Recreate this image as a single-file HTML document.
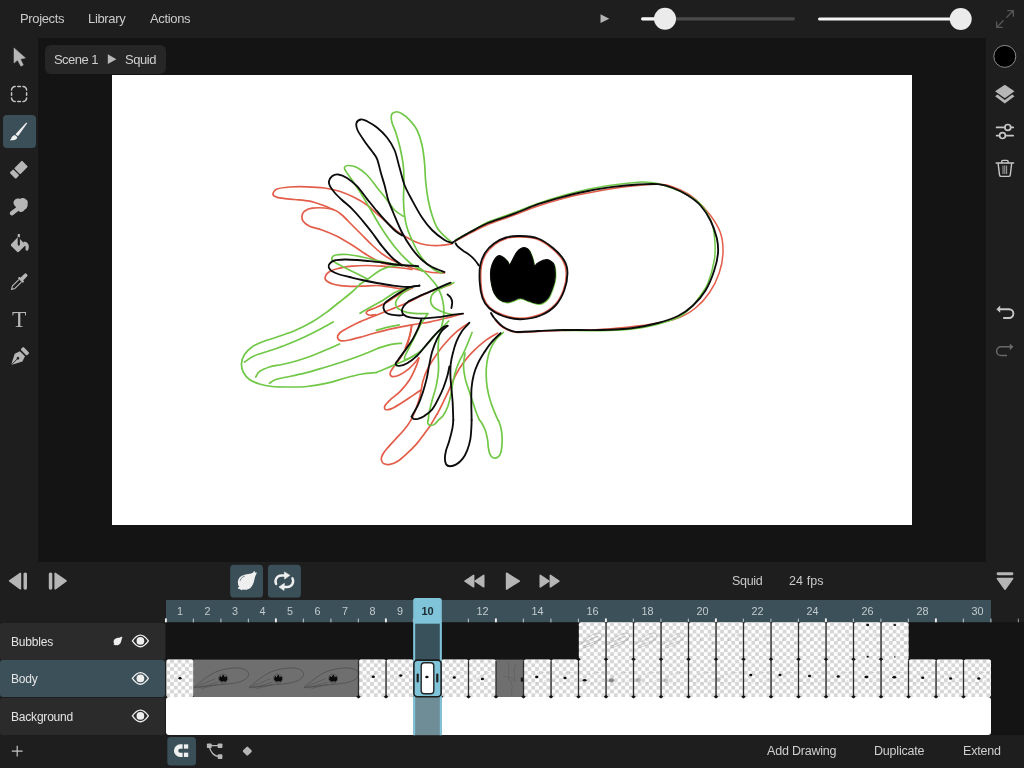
<!DOCTYPE html>
<html><head><meta charset="utf-8"><title>Animation</title>
<style>
*{margin:0;padding:0;box-sizing:border-box}
html,body{width:1024px;height:768px;overflow:hidden;background:#1e1e1e;font-family:"Liberation Sans",sans-serif;color:#d8d8d8}
.abs{position:absolute}
#app{position:relative;width:1024px;height:768px;background:#1e1e1e;overflow:hidden}
#stage{left:38px;top:38px;width:948px;height:524px;background:#141414}
#paper{left:112px;top:75px;width:800px;height:450px;background:#fff}
#crumb{left:45px;top:45px;width:121px;height:29px;border-radius:6px;background:#262626}
.menu{top:11px;font-size:13px;color:#cbcbcb;letter-spacing:-0.35px;white-space:nowrap}
.t{white-space:nowrap;position:absolute;will-change:transform}
.seltool{left:2.5px;top:115px;width:33px;height:33px;border-radius:4px;background:#3a4f58}
.row{left:0;width:165px;height:37px;border-radius:3px;background:#2b2b2b}
.row.sel{background:#3c5059}
.lbl{font-size:12px;color:#e4e4e4;left:11px;letter-spacing:-0.2px}
.btn{border-radius:4px;background:#3a4f58}
svg{position:absolute;overflow:visible}

</style></head>
<body>
<div id="app">
<!-- top bar -->
<div class="t menu" style="left:20px">Projects</div>
<div class="t menu" style="left:88px">Library</div>
<div class="t menu" style="left:150px">Actions</div>
<svg class="abs" style="left:0;top:0" width="1024" height="38">
  <path d="M600.5 14.3 L609.3 18.7 L600.5 23.1Z" fill="#b4b4b4"/>
  <rect x="641" y="17.2" width="154" height="3.2" rx="1.6" fill="#4a4a4a"/>
  <rect x="641" y="17.2" width="26" height="3.2" rx="1.6" fill="#f4f4f4"/>
  <circle cx="665" cy="18.8" r="11" fill="#ebebeb"/>
  <rect x="818" y="17.4" width="143" height="3.2" rx="1.6" fill="#f4f4f4"/>
  <circle cx="960.7" cy="19" r="11" fill="#ebebeb"/>
  <g stroke="#575757" stroke-width="1.3" fill="none" stroke-linecap="round" stroke-linejoin="round">
    <path d="M1006.8 17.2 L1013.2 10.8 M1007.8 10.6 H1013.4 V16.2"/>
    <path d="M1003.2 20.8 L996.8 27.2 M1002.2 27.4 H996.6 V21.8"/>
  </g>
</svg>
<!-- stage -->
<div id="stage" class="abs"></div>
<div id="paper" class="abs"></div>
<div id="crumb" class="abs"></div>
<div class="t" style="left:54px;top:52px;font-size:13px;color:#cfcfcf;letter-spacing:-0.55px">Scene 1</div>
<div class="t" style="left:124.5px;top:52px;font-size:13px;color:#cfcfcf;letter-spacing:-0.45px">Squid</div>
<svg class="abs" style="left:0;top:0" width="200" height="80"><path d="M107.8 54.3 L116.4 59.2 L107.8 64.1Z" fill="#b8b8b8"/></svg>
<svg class="abs" style="left:0;top:0" width="1024" height="768" viewBox="0 0 1024 768" fill="none" stroke-linecap="round" stroke-linejoin="round">
<path d="M455.5 241.0 C458.4 239.5 467.6 234.5 473.0 231.8 C478.4 229.0 481.3 227.2 488.0 224.5 C494.7 221.8 504.7 218.6 513.0 215.5 C521.3 212.4 529.7 208.8 538.0 206.0 C546.3 203.2 554.7 200.7 563.0 198.5 C571.3 196.3 579.7 194.7 588.0 193.0 C596.3 191.3 604.7 189.8 613.0 188.5 C621.3 187.2 629.7 186.2 638.0 185.5 C646.3 184.8 655.9 183.8 663.0 184.5 C670.1 185.2 675.1 187.5 680.5 190.0 C685.9 192.5 690.5 195.0 695.5 199.2 C700.5 203.5 706.3 209.9 710.5 215.5 C714.7 221.1 718.4 226.8 720.5 233.0 C722.6 239.2 723.2 246.3 723.0 253.0 C722.8 259.7 721.5 266.3 719.2 273.0 C717.0 279.7 713.2 287.2 709.2 293.0 C705.3 298.8 700.7 303.8 695.5 308.0 C690.3 312.2 685.5 315.3 678.0 318.0 C670.5 320.7 661.3 322.5 650.5 324.2 C639.7 326.0 623.4 327.5 613.0 328.5 C602.6 329.5 596.3 329.7 588.0 330.0 C579.7 330.3 571.3 330.2 563.0 330.5 C554.7 330.8 545.9 331.2 538.0 331.5 C530.1 331.8 521.3 332.9 515.5 332.2 C509.7 331.6 506.3 329.5 503.0 327.5 C499.7 325.5 496.8 321.7 495.5 320.5" stroke="#e35e4a" stroke-width="1.5" fill="none"/>
<path d="M520.5 237.0 C525.8 237.2 532.7 237.5 538.0 239.5 C543.3 241.5 548.3 245.4 552.5 249.0 C556.7 252.6 560.7 256.9 563.0 261.0 C565.3 265.1 566.2 268.6 566.2 273.5 C566.3 278.4 565.2 285.2 563.2 290.5 C561.3 295.8 558.4 301.0 554.5 305.0 C550.6 309.0 545.7 312.3 540.0 314.5 C534.3 316.7 526.6 318.2 520.5 318.2 C514.4 318.3 508.6 316.8 503.5 315.0 C498.4 313.2 493.3 310.4 490.0 307.5 C486.7 304.6 485.0 301.6 483.5 297.5 C482.0 293.4 481.3 288.2 481.0 283.0 C480.7 277.8 480.7 270.8 481.5 266.0 C482.3 261.2 483.8 257.6 486.0 254.0 C488.2 250.4 491.6 247.1 495.0 244.5 C498.4 241.9 502.2 239.8 506.5 238.5 C510.8 237.2 515.2 236.8 520.5 237.0Z" stroke="#e35e4a" stroke-width="1.4" fill="none"/>
<path d="M452.0 243.8 C449.9 244.0 443.7 245.3 439.5 245.5 C435.3 245.7 430.8 245.5 427.0 245.0 C423.2 244.5 420.3 243.8 417.0 242.5 C413.7 241.2 410.3 239.4 407.0 237.5 C403.7 235.6 400.3 233.8 397.0 231.2 C393.7 228.8 390.3 225.4 387.0 222.5 C383.7 219.6 380.3 216.7 377.0 213.8 C373.7 210.8 370.8 207.7 367.0 205.0 C363.2 202.3 359.1 199.8 354.5 197.5 C349.9 195.2 344.5 192.8 339.5 191.2 C334.5 189.7 329.9 188.8 324.5 188.0 C319.1 187.2 312.8 186.9 307.0 186.8 C301.2 186.6 294.5 186.6 289.5 187.0 C284.5 187.4 279.7 188.0 277.0 189.0 C274.3 190.0 273.7 191.8 273.2 193.0 C272.8 194.2 273.0 195.4 274.5 196.2 C276.0 197.1 278.7 197.7 282.0 198.2 C285.3 198.8 289.9 199.0 294.5 199.5 C299.1 200.0 304.9 200.3 309.5 201.2 C314.1 202.2 318.0 203.6 322.0 205.0 C326.0 206.4 331.4 208.8 333.2 209.5" stroke="#e35e4a" stroke-width="1.7" fill="none"/>
<path d="M444.5 273.0 C442.4 272.9 436.6 273.1 432.0 272.5 C427.4 271.9 421.6 270.7 417.0 269.5 C412.4 268.3 408.7 267.1 404.5 265.5 C400.3 263.9 395.8 262.0 392.0 260.0 C388.2 258.0 385.3 256.2 382.0 253.8 C378.7 251.2 375.3 248.1 372.0 245.0 C368.7 241.9 365.3 238.3 362.0 235.0 C358.7 231.7 355.3 228.3 352.0 225.0 C348.7 221.7 344.9 217.5 342.0 215.0 C339.1 212.5 337.4 211.2 334.5 210.0 C331.6 208.8 328.2 208.3 324.5 208.0 C320.8 207.7 315.3 207.7 312.0 208.2 C308.7 208.8 306.2 209.9 304.5 211.2 C302.8 212.6 302.2 214.6 302.0 216.2 C301.8 217.9 302.0 219.6 303.2 221.2 C304.5 222.9 306.4 224.8 309.5 226.2 C312.6 227.7 317.4 228.3 322.0 230.0 C326.6 231.7 332.0 233.8 337.0 236.2 C342.0 238.8 347.0 241.9 352.0 245.0 C357.0 248.1 362.4 252.2 367.0 255.0 C371.6 257.8 375.8 260.3 379.5 262.0 C383.2 263.7 387.8 264.5 389.5 265.0" stroke="#e35e4a" stroke-width="1.7" fill="none"/>
<path d="M412.0 269.5 C410.3 269.2 407.0 268.5 402.0 268.0 C397.0 267.5 387.8 266.7 382.0 266.2 C376.2 265.8 372.0 265.5 367.0 265.5 C362.0 265.5 357.0 265.7 352.0 266.2 C347.0 266.8 341.0 267.7 337.0 268.8 C333.0 269.8 330.2 271.0 328.2 272.5 C326.2 274.0 325.2 276.0 325.0 277.5 C324.8 279.0 325.4 280.1 327.0 281.2 C328.6 282.4 331.2 283.7 334.5 284.5 C337.8 285.3 342.4 286.0 347.0 286.2 C351.6 286.5 357.0 286.4 362.0 286.2 C367.0 286.1 372.4 285.4 377.0 285.5 C381.6 285.6 385.3 286.5 389.5 287.0 C393.7 287.5 398.2 288.6 402.0 288.8 C405.8 288.9 410.3 288.1 412.0 288.0" stroke="#e35e4a" stroke-width="1.7" fill="none"/>
<path d="M412.3 288.0 C410.4 288.9 404.7 291.4 400.6 293.6 C396.6 295.9 392.3 299.1 388.1 301.4 C384.0 303.8 379.0 306.1 375.6 307.7 C372.2 309.2 369.4 309.9 367.8 310.8 C366.2 311.7 366.0 312.4 366.2 313.2 C366.5 313.9 367.8 314.9 369.4 315.2 C370.9 315.4 374.6 314.8 375.6 314.7" stroke="#e35e4a" stroke-width="1.7" fill="none"/>
<path d="M451.4 284.2 C450.8 284.5 450.2 284.9 447.5 285.8 C444.8 286.7 439.2 288.2 435.0 289.7 C430.8 291.3 427.2 293.0 422.5 295.2 C417.8 297.4 412.1 300.7 406.9 303.0 C401.7 305.3 396.5 307.2 391.2 309.2 C386.0 311.3 380.8 313.4 375.6 315.5 C370.4 317.6 362.6 320.7 360.0 321.8" stroke="#e35e4a" stroke-width="1.7" fill="none"/>
<path d="M461.6 313.9 C459.2 314.6 452.7 316.5 447.5 317.8 C442.3 319.1 436.3 320.6 430.3 321.8 C424.3 322.9 418.1 323.7 411.6 324.9 C405.1 326.0 397.2 327.5 391.2 328.8 C385.3 330.1 380.8 331.3 375.6 332.7 C370.4 334.1 362.6 336.6 360.0 337.4" stroke="#e35e4a" stroke-width="1.7" fill="none"/>
<path d="M411.6 324.9 C411.4 326.4 411.4 330.4 410.3 334.2 C409.3 338.1 406.1 345.7 405.3 348.0" stroke="#e35e4a" stroke-width="1.7" fill="none"/>
<path d="M411.9 325.0 C411.5 326.8 410.5 332.3 409.6 335.9 C408.7 339.6 408.2 343.0 406.5 346.9 C404.8 350.8 401.8 355.7 399.4 359.4 C397.1 363.0 394.0 366.4 392.4 368.8 C390.8 371.1 390.1 372.1 390.1 373.4 C390.1 374.7 390.8 376.3 392.4 376.6 C394.0 376.8 396.7 376.3 399.4 375.0 C402.2 373.7 406.1 371.0 408.8 368.8 C411.5 366.5 414.2 363.5 415.8 361.7 C417.5 359.9 418.1 358.5 418.5 357.8" stroke="#e35e4a" stroke-width="1.7" fill="none"/>
<path d="M419.0 358.1 C418.4 359.6 417.4 363.6 415.8 367.2 C414.3 370.8 412.2 375.7 409.6 379.7 C407.0 383.7 403.3 388.2 400.2 391.4 C397.1 394.7 393.4 396.9 390.8 399.2 C388.3 401.6 386.0 403.8 385.1 405.5 C384.2 407.2 384.3 408.9 385.4 409.4 C386.5 409.9 388.8 409.8 391.6 408.6 C394.5 407.4 399.0 404.5 402.6 402.3 C406.1 400.2 409.7 397.6 412.7 395.6 C415.7 393.6 419.2 391.2 420.5 390.3" stroke="#e35e4a" stroke-width="1.7" fill="none"/>
<path d="M468.2 323.4 C466.4 324.7 461.2 327.9 457.2 331.2 C453.3 334.6 448.4 339.6 444.8 343.8 C441.1 347.9 438.2 352.1 435.4 356.2 C432.5 360.4 429.6 364.6 427.6 368.8 C425.5 372.9 424.0 377.3 422.9 381.2 C421.8 385.2 421.6 388.8 420.8 392.2 C420.1 395.6 419.5 398.4 418.5 401.6 C417.5 404.7 415.6 409.6 415.1 411.2" stroke="#e35e4a" stroke-width="1.7" fill="none"/>
<path d="M497.6 333.1 C495.5 334.4 489.5 337.6 485.4 340.6 C481.3 343.7 476.5 347.9 472.9 351.6 C469.2 355.2 466.4 358.6 463.5 362.5 C460.6 366.4 458.0 370.6 455.7 375.0 C453.3 379.4 451.5 384.6 449.4 389.1 C447.4 393.5 445.5 397.4 443.5 401.6 C441.5 405.7 438.3 412.0 437.2 414.1" stroke="#e35e4a" stroke-width="1.7" fill="none"/>
<path d="M415.0 411.2 C414.3 412.9 412.3 417.8 410.5 420.9 C408.7 424.1 406.6 426.8 403.9 430.0 C401.3 433.2 397.4 437.0 394.6 440.2 C391.7 443.3 388.8 446.3 386.8 448.8 C384.7 451.2 383.3 453.2 382.4 455.0 C381.5 456.8 381.1 458.3 381.3 459.7 C381.5 461.1 382.2 462.8 383.6 463.6 C385.1 464.4 387.5 464.8 389.9 464.4 C392.2 464.0 394.8 463.1 397.7 461.2 C400.6 459.4 403.9 456.3 407.1 453.4 C410.2 450.6 413.6 447.3 416.4 444.1 C419.3 440.8 421.9 437.0 424.2 433.9 C426.6 430.8 428.6 428.2 430.5 425.3 C432.4 422.4 434.4 418.6 435.5 416.7 C436.6 414.8 436.9 414.5 437.2 414.1" stroke="#e35e4a" stroke-width="1.7" fill="none"/>
<path d="M360.0 321.8 C358.2 322.6 352.7 325.3 349.5 327.0 C346.3 328.7 342.8 330.3 340.8 332.0 C338.8 333.7 337.5 335.5 337.5 337.0 C337.5 338.5 338.8 340.2 340.8 340.8 C342.8 341.2 346.3 340.6 349.5 340.0 C352.7 339.4 358.2 337.7 360.0 337.2" stroke="#e35e4a" stroke-width="1.7" fill="none"/>
<path d="M455.5 240.0 C458.4 238.4 467.6 233.5 473.0 230.5 C478.4 227.5 481.3 224.9 488.0 222.0 C494.7 219.1 504.7 216.1 513.0 213.0 C521.3 209.9 529.7 206.4 538.0 203.5 C546.3 200.6 554.7 197.9 563.0 195.5 C571.3 193.1 579.7 191.0 588.0 189.2 C596.3 187.5 604.7 186.2 613.0 185.0 C621.3 183.8 631.8 182.7 638.0 182.2 C644.2 181.8 646.3 182.0 650.5 182.5 C654.7 183.0 657.6 183.3 663.0 185.0 C668.4 186.7 676.8 189.3 683.0 192.5 C689.2 195.7 695.7 199.2 700.5 204.2 C705.3 209.3 709.3 216.5 711.8 223.0 C714.2 229.5 714.6 236.8 715.0 243.0 C715.4 249.2 715.4 253.8 714.2 260.5 C713.1 267.2 710.3 277.2 708.0 283.0 C705.7 288.8 703.4 291.3 700.5 295.5 C697.6 299.7 694.2 304.3 690.5 308.0 C686.8 311.7 684.7 314.5 678.0 317.5 C671.3 320.5 658.8 324.0 650.5 326.0 C642.2 328.0 636.3 328.7 628.0 329.5 C619.7 330.3 611.3 330.6 600.5 330.8 C589.7 330.9 569.2 330.5 563.0 330.5" stroke="#70c846" stroke-width="1.5" fill="none"/>
<path d="M492.2 266.2 C493.1 263.5 494.8 260.4 496.0 258.8 C497.2 257.1 498.4 256.3 499.8 256.2 C501.1 256.2 502.6 257.2 504.0 258.2 C505.4 259.2 507.0 261.0 508.0 262.2 C509.0 263.5 509.2 265.7 510.0 265.5 C510.8 265.3 511.5 263.4 512.8 261.2 C514.0 259.1 515.9 254.6 517.5 252.5 C519.1 250.4 520.8 249.4 522.2 248.8 C523.7 248.1 524.8 248.1 526.0 248.5 C527.2 248.9 528.6 249.5 529.8 251.2 C530.9 253.0 532.1 256.7 533.0 259.2 C533.9 261.8 534.2 266.0 535.0 266.8 C535.8 267.5 536.2 265.0 538.0 264.0 C539.8 263.0 543.3 260.9 545.5 260.5 C547.7 260.1 549.5 260.8 551.0 261.8 C552.5 262.7 554.0 263.4 554.8 266.2 C555.5 269.1 555.8 275.0 555.5 278.8 C555.2 282.5 554.2 285.4 553.0 288.8 C551.8 292.1 550.3 296.2 548.5 298.8 C546.7 301.2 544.3 302.9 542.2 303.8 C540.2 304.6 538.1 304.1 536.0 303.8 C533.9 303.4 532.2 302.6 529.8 301.8 C527.2 300.9 523.7 298.8 521.0 298.8 C518.3 298.7 515.8 300.6 513.5 301.2 C511.2 301.9 509.5 303.0 507.2 302.8 C505.0 302.5 501.8 301.5 499.8 300.0 C497.7 298.5 496.0 296.0 494.8 293.8 C493.5 291.5 492.9 289.4 492.2 286.2 C491.6 283.1 491.0 278.3 491.0 275.0 C491.0 271.7 491.4 269.0 492.2 266.2Z" stroke="#70c846" stroke-width="1.5" fill="none"/>
<path d="M452.0 242.5 C450.8 241.5 447.0 238.8 444.5 236.2 C442.0 233.8 439.1 231.0 437.0 227.5 C434.9 224.0 433.5 219.6 432.0 215.0 C430.5 210.4 429.3 205.4 428.2 200.0 C427.2 194.6 426.4 188.8 425.8 182.5 C425.1 176.2 425.1 168.8 424.5 162.5 C423.9 156.2 423.2 150.4 422.0 145.0 C420.8 139.6 419.1 134.2 417.0 130.0 C414.9 125.8 412.0 122.7 409.5 120.0 C407.0 117.3 404.3 115.1 402.0 113.8 C399.7 112.4 397.5 111.5 395.8 111.8 C394.0 112.0 392.1 113.2 391.5 115.0 C390.9 116.8 391.3 119.6 392.0 122.5 C392.7 125.4 394.4 128.3 395.8 132.5 C397.1 136.7 398.8 142.1 400.0 147.5 C401.2 152.9 402.6 159.2 403.2 165.0 C403.9 170.8 404.0 176.7 404.0 182.5 C404.0 188.3 403.4 194.6 403.5 200.0 C403.6 205.4 403.9 210.4 404.5 215.0 C405.1 219.6 405.8 223.3 407.0 227.5 C408.2 231.7 410.1 235.8 412.0 240.0 C413.9 244.2 416.0 248.8 418.2 252.5 C420.5 256.2 423.0 259.6 425.8 262.5 C428.5 265.4 431.8 268.2 434.5 270.0 C437.2 271.8 440.8 272.5 442.0 273.0" stroke="#70c846" stroke-width="1.7" fill="none"/>
<path d="M403.2 216.2 C401.8 215.2 397.2 212.7 394.5 210.0 C391.8 207.3 389.9 203.8 387.0 200.0 C384.1 196.2 380.3 191.7 377.0 187.5 C373.7 183.3 370.3 178.3 367.0 175.0 C363.7 171.7 360.1 169.1 357.0 167.5 C353.9 165.9 350.3 165.5 348.2 165.5 C346.2 165.5 344.9 166.5 344.5 167.5 C344.1 168.5 344.5 169.2 345.8 171.2 C347.0 173.3 349.3 176.0 352.0 180.0 C354.7 184.0 358.9 190.0 362.0 195.0 C365.1 200.0 367.8 205.0 370.8 210.0 C373.7 215.0 376.4 220.0 379.5 225.0 C382.6 230.0 386.2 235.4 389.5 240.0 C392.8 244.6 396.2 248.8 399.5 252.5 C402.8 256.2 406.6 259.9 409.5 262.5 C412.4 265.1 414.9 266.6 417.0 268.0 C419.1 269.4 421.2 270.5 422.0 271.0" stroke="#70c846" stroke-width="1.7" fill="none"/>
<path d="M407.0 265.5 C404.5 265.2 397.0 264.6 392.0 263.8 C387.0 262.9 382.0 261.6 377.0 260.5 C372.0 259.4 367.0 258.0 362.0 257.0 C357.0 256.0 351.4 254.8 347.0 254.5 C342.6 254.2 338.2 254.5 335.8 255.0 C333.2 255.5 332.4 256.5 332.0 257.5 C331.6 258.5 331.6 259.8 333.2 261.2 C334.9 262.7 338.5 264.4 342.0 266.2 C345.5 268.1 350.3 270.4 354.5 272.5 C358.7 274.6 364.9 277.7 367.0 278.8" stroke="#70c846" stroke-width="1.7" fill="none"/>
<path d="M415.5 265.5 C416.6 266.3 420.0 268.1 422.5 270.2 C425.0 272.3 428.0 275.4 430.3 278.0 C432.7 280.6 434.7 282.9 436.6 285.8 C438.4 288.7 440.1 291.8 441.2 295.2 C442.4 298.6 443.2 302.5 443.6 306.1 C444.0 309.8 444.0 313.4 443.6 317.1 C443.2 320.7 442.0 324.6 441.2 328.0 C440.5 331.4 439.4 334.0 438.9 337.4 C438.4 340.7 438.3 346.2 438.1 348.0" stroke="#70c846" stroke-width="1.7" fill="none"/>
<path d="M403.8 265.2 C401.7 265.4 395.2 265.4 391.2 266.3 C387.3 267.1 384.0 268.2 380.3 270.2 C376.7 272.1 372.8 275.7 369.4 278.0 C366.0 280.3 361.6 283.2 360.0 284.2" stroke="#70c846" stroke-width="1.7" fill="none"/>
<path d="M406.9 288.2 C405.1 288.8 399.8 290.1 395.9 292.1 C392.0 294.0 387.9 297.3 383.4 299.9 C379.0 302.5 373.3 305.5 369.4 307.7 C365.5 309.9 361.6 312.2 360.0 313.2" stroke="#70c846" stroke-width="1.7" fill="none"/>
<path d="M411.6 287.4 C410.0 288.4 404.7 291.5 402.2 293.6 C399.7 295.7 397.8 298.1 396.7 299.9 C395.6 301.7 395.2 303.0 395.6 304.6 C396.0 306.1 397.2 307.9 399.1 309.2 C400.9 310.6 403.8 311.6 406.9 312.4 C410.0 313.1 414.3 313.4 417.8 313.6 C421.3 313.8 426.3 313.6 428.0 313.6" stroke="#70c846" stroke-width="1.7" fill="none"/>
<path d="M453.8 282.7 C452.2 283.3 447.2 285.3 444.4 286.6 C441.5 287.9 438.6 289.1 436.6 290.5 C434.5 291.9 432.9 293.4 431.9 295.2 C430.9 297.0 430.4 299.5 430.6 301.4 C430.9 303.4 431.9 305.3 433.4 306.9 C434.9 308.5 437.3 309.7 439.7 310.8 C442.0 311.9 445.2 313.0 447.5 313.6 C449.8 314.3 452.7 314.5 453.8 314.7" stroke="#70c846" stroke-width="1.7" fill="none"/>
<path d="M376.4 330.3 C378.4 329.8 384.3 328.1 388.1 327.2 C391.9 326.3 397.2 325.3 399.1 324.9" stroke="#70c846" stroke-width="1.8" fill="none"/>
<path d="M378.8 348.0 C380.8 347.4 387.5 345.2 391.2 344.4 C395.0 343.6 399.7 343.5 401.4 343.3" stroke="#70c846" stroke-width="1.7" fill="none"/>
<path d="M438.2 348.0 C438.2 349.1 438.1 351.0 438.2 354.7 C438.2 358.4 438.8 365.1 438.5 370.3 C438.2 375.5 437.2 381.0 436.2 385.9 C435.1 390.9 433.4 395.6 432.2 400.0 C431.1 404.4 429.8 409.2 429.1 412.5 C428.5 415.8 428.5 418.8 428.3 420.0" stroke="#70c846" stroke-width="1.7" fill="none"/>
<path d="M427.6 314.1 C426.5 315.6 423.4 319.8 421.3 323.4 C419.2 327.1 417.1 331.8 415.1 335.9 C413.0 340.1 410.5 345.1 408.8 348.4 C407.1 351.8 405.6 354.4 404.9 356.2 C404.3 358.1 404.0 359.1 404.9 359.4 C405.8 359.6 407.9 359.1 410.4 357.8 C412.8 356.5 416.6 354.2 419.8 351.6 C422.9 349.0 426.0 345.6 429.1 342.2 C432.2 338.8 435.9 334.1 438.5 331.2 C441.1 328.4 443.1 326.7 444.8 325.0 C446.4 323.3 448.0 321.7 448.7 321.1" stroke="#70c846" stroke-width="1.7" fill="none"/>
<path d="M416.6 353.9 C415.1 354.8 410.6 357.7 407.2 359.4 C403.9 361.1 400.0 362.5 396.3 364.1 C392.7 365.6 388.8 367.3 385.4 368.8 C382.0 370.2 377.6 372.0 376.0 372.7" stroke="#70c846" stroke-width="1.7" fill="none"/>
<path d="M472.1 332.5 C471.4 334.1 469.6 338.8 468.2 342.2 C466.8 345.6 465.1 349.7 463.5 353.1 C461.9 356.5 460.2 359.1 458.8 362.5 C457.4 365.9 455.9 369.8 454.9 373.4 C453.9 377.1 453.3 380.7 452.6 384.4 C451.9 388.0 451.5 391.7 450.7 395.3 C449.9 399.0 449.1 402.9 447.9 406.2 C446.6 409.6 444.8 413.3 443.2 415.6 C441.6 417.9 439.3 419.3 438.5 420.0" stroke="#70c846" stroke-width="1.7" fill="none"/>
<path d="M465.1 353.1 C464.8 355.2 463.5 361.5 463.5 365.6 C463.5 369.8 464.2 374.0 465.1 378.1 C466.0 382.3 467.7 386.7 469.0 390.6 C470.2 394.5 471.3 397.9 472.6 401.6 C473.8 405.2 475.2 409.4 476.3 412.5 C477.5 415.6 478.9 418.8 479.4 420.0" stroke="#70c846" stroke-width="1.7" fill="none"/>
<path d="M503.3 332.5 C502.2 333.6 498.5 336.1 496.3 339.1 C494.1 342.0 491.6 346.1 490.1 350.0 C488.5 353.9 487.6 358.3 486.9 362.5 C486.3 366.7 486.1 370.8 486.2 375.0 C486.2 379.2 486.6 383.3 487.2 387.5 C487.9 391.7 488.9 396.1 490.1 400.0 C491.2 403.9 492.7 407.6 494.0 410.9 C495.3 414.3 497.2 418.5 497.9 420.0" stroke="#70c846" stroke-width="1.7" fill="none"/>
<path d="M428.3 420.0 C428.2 420.5 427.4 422.1 427.7 423.0 C428.0 423.9 429.1 425.1 430.2 425.3 C431.3 425.5 433.0 425.3 434.4 424.4 C435.8 423.5 437.8 420.7 438.5 420.0" stroke="#70c846" stroke-width="1.7" fill="none"/>
<path d="M479.4 420.0 C479.7 420.4 480.3 420.5 481.3 422.2 C482.2 423.9 484.1 427.1 485.2 430.0 C486.2 432.9 487.0 436.5 487.5 439.4 C488.1 442.2 487.9 444.7 488.3 447.2 C488.7 449.7 489.1 452.4 489.9 454.2 C490.7 456.0 491.7 457.3 493.0 457.8 C494.3 458.3 496.4 458.2 497.7 457.3 C499.0 456.5 500.1 455.1 500.8 452.7 C501.5 450.2 501.9 446.0 502.1 442.5 C502.2 439.0 502.1 434.9 501.6 431.6 C501.1 428.2 499.9 424.1 499.2 422.2 C498.6 420.3 498.1 420.4 497.8 420.0" stroke="#70c846" stroke-width="1.7" fill="none"/>
<path d="M360.0 284.2 C358.7 285.5 355.4 289.0 352.0 292.0 C348.6 295.0 343.7 298.7 339.5 302.0 C335.3 305.3 331.6 308.7 327.0 312.0 C322.4 315.3 317.4 318.9 312.0 322.0 C306.6 325.1 300.3 328.2 294.5 330.8 C288.7 333.2 282.4 335.1 277.0 337.0 C271.6 338.9 266.2 340.3 262.0 342.0 C257.8 343.7 254.9 344.9 252.0 347.0 C249.1 349.1 246.2 351.8 244.5 354.5 C242.8 357.2 241.7 360.3 241.5 363.2 C241.3 366.2 241.9 369.3 243.2 372.0 C244.6 374.7 246.8 377.5 249.5 379.5 C252.2 381.5 255.8 382.8 259.5 384.0 C263.2 385.2 267.0 386.0 272.0 386.5 C277.0 387.0 283.7 387.0 289.5 387.0 C295.3 387.0 300.8 387.1 307.0 386.5 C313.2 385.9 320.8 384.6 327.0 383.2 C333.2 381.9 338.7 379.8 344.5 378.2 C350.3 376.7 356.8 375.0 362.0 374.0 C367.2 373.0 373.7 372.8 376.0 372.5" stroke="#70c846" stroke-width="1.7" fill="none"/>
<path d="M333.2 322.0 C331.0 323.2 324.3 327.0 319.5 329.5 C314.7 332.0 309.9 334.5 304.5 337.0 C299.1 339.5 292.8 342.2 287.0 344.5 C281.2 346.8 274.9 348.9 269.5 350.8 C264.1 352.6 258.7 353.9 254.5 355.8 C250.3 357.6 246.2 361.0 244.5 362.0" stroke="#70c846" stroke-width="1.7" fill="none"/>
<path d="M339.5 344.0 C337.4 344.9 331.6 347.5 327.0 349.5 C322.4 351.5 317.0 353.9 312.0 355.8 C307.0 357.6 302.0 359.3 297.0 360.8 C292.0 362.2 286.6 363.5 282.0 364.5 C277.4 365.5 273.2 365.8 269.5 367.0 C265.8 368.2 261.8 369.8 259.5 371.5 C257.2 373.2 256.4 376.1 255.8 377.0" stroke="#70c846" stroke-width="1.7" fill="none"/>
<path d="M378.8 348.0 C376.0 349.2 368.1 352.7 362.0 355.0 C355.9 357.3 348.7 359.8 342.0 362.0 C335.3 364.2 328.2 366.4 322.0 368.2 C315.8 370.1 310.3 371.8 304.5 373.2 C298.7 374.7 291.8 376.0 287.0 377.0 C282.2 378.0 278.7 378.5 275.8 379.5 C272.8 380.5 270.5 382.6 269.5 383.2" stroke="#70c846" stroke-width="1.7" fill="none"/>
<path d="M452.0 243.0 C453.8 241.8 459.1 238.3 463.0 236.0 C466.9 233.7 471.3 231.4 475.5 229.2 C479.7 227.1 481.8 225.5 488.0 223.0 C494.2 220.5 504.7 217.4 513.0 214.2 C521.3 211.1 529.7 207.2 538.0 204.2 C546.3 201.3 554.7 199.0 563.0 196.8 C571.3 194.5 579.7 192.7 588.0 191.0 C596.3 189.3 604.7 187.8 613.0 186.8 C621.3 185.7 630.5 184.9 638.0 184.5 C645.5 184.1 652.2 183.7 658.0 184.2 C663.8 184.8 668.0 186.1 673.0 188.0 C678.0 189.9 683.4 192.6 688.0 195.5 C692.6 198.4 696.8 201.3 700.5 205.5 C704.2 209.7 707.8 215.1 710.5 220.5 C713.2 225.9 715.5 232.6 716.8 238.0 C718.0 243.4 718.4 247.6 718.0 253.0 C717.6 258.4 716.3 264.2 714.2 270.5 C712.2 276.8 709.0 284.7 705.5 290.5 C702.0 296.3 697.6 301.2 693.0 305.5 C688.4 309.8 683.8 313.1 678.0 316.0 C672.2 318.9 665.5 321.0 658.0 323.0 C650.5 325.0 642.6 326.8 633.0 328.0 C623.4 329.2 612.2 329.7 600.5 330.0 C588.8 330.3 573.4 329.8 563.0 330.0 C552.6 330.2 545.9 330.7 538.0 331.0 C530.1 331.3 521.3 332.5 515.5 331.8 C509.7 331.0 506.5 329.0 503.0 326.8 C499.5 324.5 496.2 320.3 494.2 318.0 C492.2 315.7 491.5 313.8 491.0 313.0" stroke="#0c0c0c" stroke-width="1.85" fill="none"/>
<path d="M520.5 236.0 C525.8 236.2 532.6 236.5 538.0 238.5 C543.4 240.5 548.6 244.3 553.0 248.0 C557.4 251.7 561.8 256.3 564.2 260.5 C566.7 264.7 567.5 268.0 567.5 273.0 C567.5 278.0 566.2 285.1 564.2 290.5 C562.2 295.9 559.5 301.3 555.5 305.5 C551.5 309.7 546.3 313.2 540.5 315.5 C534.7 317.8 526.8 319.2 520.5 319.2 C514.2 319.3 508.2 317.9 503.0 316.0 C497.8 314.1 492.4 311.0 489.0 308.0 C485.6 305.0 484.0 302.2 482.5 298.0 C481.0 293.8 480.1 288.4 479.8 283.0 C479.4 277.6 479.4 270.5 480.2 265.5 C481.1 260.5 482.7 256.7 485.0 253.0 C487.3 249.3 490.5 246.1 494.0 243.5 C497.5 240.9 501.6 238.8 506.0 237.5 C510.4 236.2 515.2 235.8 520.5 236.0Z" stroke="#0c0c0c" stroke-width="1.85" fill="none"/>
<path d="M491.8 265.5 C492.6 262.8 494.2 259.7 495.5 258.0 C496.8 256.3 497.9 255.6 499.2 255.5 C500.6 255.4 502.1 256.5 503.5 257.5 C504.9 258.5 506.5 260.3 507.5 261.5 C508.5 262.7 508.7 264.9 509.5 264.8 C510.3 264.6 511.0 262.7 512.2 260.5 C513.5 258.3 515.4 253.8 517.0 251.8 C518.6 249.7 520.3 248.7 521.8 248.0 C523.2 247.3 524.2 247.3 525.5 247.8 C526.8 248.2 528.1 248.7 529.2 250.5 C530.4 252.3 531.6 255.9 532.5 258.5 C533.4 261.1 533.7 265.2 534.5 266.0 C535.3 266.8 535.8 264.3 537.5 263.2 C539.2 262.2 542.8 260.1 545.0 259.8 C547.2 259.4 549.0 260.0 550.5 261.0 C552.0 262.0 553.5 262.7 554.2 265.5 C555.0 268.3 555.3 274.2 555.0 278.0 C554.7 281.8 553.7 284.7 552.5 288.0 C551.3 291.3 549.8 295.5 548.0 298.0 C546.2 300.5 543.8 302.2 541.8 303.0 C539.7 303.8 537.6 303.3 535.5 303.0 C533.4 302.7 531.8 301.8 529.2 301.0 C526.8 300.2 523.2 298.1 520.5 298.0 C517.8 297.9 515.3 299.8 513.0 300.5 C510.7 301.2 509.0 302.2 506.8 302.0 C504.5 301.8 501.3 300.8 499.2 299.2 C497.2 297.8 495.5 295.3 494.2 293.0 C493.0 290.7 492.4 288.6 491.8 285.5 C491.1 282.4 490.5 277.6 490.5 274.2 C490.5 270.9 490.9 268.2 491.8 265.5Z" stroke="#0c0c0c" stroke-width="1.2" fill="#000"/>
<path d="M452.5 243.0 C451.2 242.5 447.9 242.2 444.5 240.0 C441.1 237.8 435.8 233.8 432.0 230.0 C428.2 226.2 425.3 222.5 422.0 217.5 C418.7 212.5 414.9 205.4 412.0 200.0 C409.1 194.6 406.6 190.4 404.5 185.0 C402.4 179.6 401.2 173.3 399.5 167.5 C397.8 161.7 396.6 155.0 394.5 150.0 C392.4 145.0 389.9 141.2 387.0 137.5 C384.1 133.8 380.3 130.2 377.0 127.5 C373.7 124.8 369.7 122.6 367.0 121.2 C364.3 119.9 362.5 119.2 360.8 119.5 C359.0 119.8 357.0 121.2 356.5 123.0 C356.0 124.8 356.2 127.0 357.5 130.0 C358.8 133.0 362.1 137.7 364.5 141.2 C366.9 144.8 369.9 148.3 372.0 151.2 C374.1 154.2 375.5 155.2 377.0 158.8 C378.5 162.3 379.5 168.1 380.8 172.5 C382.0 176.9 383.2 180.4 384.5 185.0 C385.8 189.6 386.8 195.4 388.2 200.0 C389.7 204.6 391.0 207.1 393.2 212.5 C395.5 217.9 398.9 226.5 402.0 232.5 C405.1 238.5 408.7 244.2 412.0 248.8 C415.3 253.3 418.7 257.0 422.0 260.0 C425.3 263.0 428.2 265.0 432.0 267.0 C435.8 269.0 442.4 271.2 444.5 272.0" stroke="#0c0c0c" stroke-width="1.85" fill="none"/>
<path d="M402.5 235.5 C401.4 234.8 398.3 233.4 395.8 231.2 C393.2 229.1 390.1 225.8 387.0 222.5 C383.9 219.2 380.3 215.2 377.0 211.2 C373.7 207.3 370.3 202.9 367.0 198.8 C363.7 194.6 360.3 189.7 357.0 186.2 C353.7 182.8 350.1 180.0 347.0 178.0 C343.9 176.0 340.8 174.8 338.2 174.5 C335.8 174.2 333.5 175.1 332.0 176.2 C330.5 177.4 329.3 179.6 329.0 181.2 C328.7 182.9 329.1 184.4 330.0 186.2 C330.9 188.1 332.5 190.2 334.5 192.5 C336.5 194.8 339.1 197.3 342.0 200.0 C344.9 202.7 348.7 205.4 352.0 208.8 C355.3 212.1 358.7 216.0 362.0 220.0 C365.3 224.0 368.7 228.1 372.0 232.5 C375.3 236.9 378.7 242.1 382.0 246.2 C385.3 250.4 388.7 254.3 392.0 257.5 C395.3 260.7 400.3 264.2 402.0 265.5" stroke="#0c0c0c" stroke-width="1.85" fill="none"/>
<path d="M418.2 266.2 C416.4 266.1 411.0 265.8 407.0 265.5 C403.0 265.2 398.7 265.0 394.5 264.5 C390.3 264.0 386.2 263.0 382.0 262.5 C377.8 262.0 373.7 261.7 369.5 261.2 C365.3 260.8 361.2 260.3 357.0 260.0 C352.8 259.7 348.2 259.4 344.5 259.5 C340.8 259.6 337.0 259.8 334.5 260.5 C332.0 261.2 330.5 262.6 329.5 263.8 C328.5 264.9 328.3 266.2 328.8 267.5 C329.2 268.8 330.2 270.1 332.0 271.2 C333.8 272.4 336.6 273.5 339.5 274.5 C342.4 275.5 345.8 276.1 349.5 277.0 C353.2 277.9 357.4 279.0 362.0 280.0 C366.6 281.0 372.0 282.1 377.0 283.0 C382.0 283.9 387.0 284.8 392.0 285.5 C397.0 286.2 402.4 287.0 407.0 287.0 C411.6 287.0 417.4 285.8 419.5 285.5" stroke="#0c0c0c" stroke-width="1.85" fill="none"/>
<path d="M455.6 243.3 C456.0 243.8 456.4 245.2 457.7 246.4 C458.9 247.7 461.2 249.2 463.1 250.7 C465.1 252.1 467.4 253.3 469.4 254.9 C471.3 256.4 473.3 258.3 474.8 260.0 C476.4 261.8 478.1 264.6 478.8 265.5" stroke="#0c0c0c" stroke-width="1.85" fill="none"/>
<path d="M419.4 285.8 C417.8 286.0 413.1 286.0 410.0 287.1 C406.9 288.1 403.8 290.2 400.6 292.1 C397.5 293.9 393.9 296.5 391.2 298.3 C388.6 300.1 386.3 301.4 385.0 303.0 C383.7 304.6 383.3 306.1 383.4 307.7 C383.6 309.2 384.5 311.2 385.8 312.4 C387.1 313.5 389.0 314.2 391.2 314.7 C393.5 315.2 397.0 315.5 399.1 315.5 C401.1 315.5 402.7 315.0 403.4 314.9" stroke="#0c0c0c" stroke-width="1.85" fill="none"/>
<path d="M450.6 282.7 C449.1 283.3 444.9 285.0 441.2 286.6 C437.6 288.2 432.7 290.4 428.8 292.1 C424.8 293.8 421.2 295.2 417.8 296.8 C414.4 298.3 410.8 299.9 408.4 301.4 C406.1 303.0 404.8 304.6 403.8 306.1 C402.7 307.7 401.9 309.4 401.9 310.8 C401.9 312.2 402.4 313.6 403.8 314.7 C405.1 315.8 407.4 316.8 410.0 317.4 C412.6 318.0 416.0 318.2 419.4 318.3 C422.8 318.4 426.7 318.1 430.3 317.8 C434.0 317.6 437.3 317.3 441.2 316.8 C445.2 316.2 450.1 315.2 453.8 314.7 C457.4 314.2 461.6 313.8 463.1 313.6" stroke="#0c0c0c" stroke-width="1.85" fill="none"/>
<path d="M447.5 294.4 C448.0 294.9 449.8 296.2 450.6 297.5 C451.4 298.8 452.1 300.5 452.2 302.2 C452.3 304.0 451.5 307.0 451.4 308.0" stroke="#0c0c0c" stroke-width="1.85" fill="none"/>
<path d="M421.3 319.5 C420.8 321.0 419.8 324.6 418.2 328.1 C416.6 331.6 414.3 336.7 411.9 340.6 C409.6 344.5 406.5 348.3 404.1 351.6 C401.8 354.8 399.3 358.1 397.9 360.2 C396.4 362.2 395.3 363.1 395.5 364.1 C395.8 365.0 397.5 366.1 399.4 365.9 C401.4 365.8 404.4 364.9 407.2 363.3 C410.1 361.7 413.5 359.2 416.6 356.2 C419.8 353.3 422.9 349.0 426.0 345.3 C429.1 341.7 432.5 337.4 435.4 334.4 C438.2 331.4 441.2 328.8 443.2 327.3 C445.2 325.9 446.8 326.0 447.6 325.8" stroke="#0c0c0c" stroke-width="1.85" fill="none"/>
<path d="M447.6 325.8 C446.6 326.7 443.4 329.0 441.6 331.2 C439.9 333.5 438.5 335.7 436.9 339.1 C435.4 342.4 433.6 347.1 432.2 351.6 C430.9 356.0 430.0 361.2 429.1 365.6 C428.2 370.1 427.8 373.7 426.8 378.1 C425.7 382.6 424.3 387.8 422.9 392.2 C421.4 396.6 419.8 401.1 418.2 404.7 C416.6 408.3 414.3 411.7 413.2 413.8 C412.1 415.8 411.9 416.2 411.6 416.7" stroke="#0c0c0c" stroke-width="1.85" fill="none"/>
<path d="M469.4 322.7 C468.2 324.1 464.1 328.1 461.9 331.2 C459.8 334.4 458.0 337.8 456.5 341.4 C455.0 345.1 453.8 349.3 452.9 353.1 C451.9 356.9 451.1 360.4 450.7 364.1 C450.3 367.7 450.3 371.1 450.4 375.0 C450.5 378.9 450.9 383.1 451.3 387.5 C451.7 391.9 452.2 396.1 452.6 401.6 C452.9 407.0 453.2 416.9 453.3 420.0" stroke="#0c0c0c" stroke-width="1.85" fill="none"/>
<path d="M449.4 366.4 C449.1 367.8 448.6 371.5 447.6 375.0 C446.6 378.5 445.0 383.6 443.5 387.5 C442.0 391.4 440.4 394.8 438.5 398.4 C436.6 402.1 434.6 406.5 432.2 409.4 C429.9 412.3 426.8 414.4 424.4 415.9 C422.0 417.5 419.7 418.3 417.9 418.8 C416.1 419.2 414.5 419.1 413.5 418.8 C412.5 418.4 411.9 417.1 411.6 416.7" stroke="#0c0c0c" stroke-width="1.85" fill="none"/>
<path d="M500.7 333.1 C499.2 334.6 494.4 338.9 491.6 342.2 C488.8 345.5 486.2 349.5 483.8 353.1 C481.5 356.8 479.3 360.4 477.6 364.1 C475.9 367.7 474.6 371.1 473.7 375.0 C472.7 378.9 472.0 383.1 471.6 387.5 C471.2 391.9 471.3 396.1 471.3 401.6 C471.3 407.0 471.6 416.9 471.6 420.0" stroke="#0c0c0c" stroke-width="1.85" fill="none"/>
<path d="M453.3 420.0 C453.2 421.4 453.1 424.9 452.4 428.4 C451.7 431.9 450.3 437.3 449.2 440.9 C448.2 444.6 446.9 447.4 446.1 450.3 C445.4 453.2 444.9 455.8 444.9 458.1 C444.9 460.5 445.3 463.0 446.1 464.4 C447.0 465.7 448.3 466.2 450.0 466.2 C451.7 466.2 454.2 465.6 456.3 464.4 C458.4 463.2 460.7 461.2 462.5 458.9 C464.4 456.6 465.9 453.6 467.2 450.3 C468.5 447.1 469.6 443.3 470.3 439.4 C471.0 435.5 471.2 430.1 471.4 426.9 C471.6 423.6 471.6 421.1 471.6 420.0" stroke="#0c0c0c" stroke-width="1.85" fill="none"/>
</svg>
<!-- left toolbar -->
<div class="abs seltool"></div>
<svg class="abs" style="left:0;top:0" width="1024" height="768" viewBox="0 0 1024 768"><path d="M14 47.9 L14 63.1 L17.5 60.1 L20.9 66.2 L23.3 64.9 L20.4 59.1 L25.4 57.9 Z" fill="#b6b6b6" stroke="#b6b6b6" stroke-width="0.5" stroke-linejoin="round"/>
<path d="M11.55 90.05 A3.6 3.6 0 0 1 15.15 86.45 M23.00 86.45 A3.6 3.6 0 0 1 26.60 90.05 M26.60 97.90 A3.6 3.6 0 0 1 23.00 101.50 M15.15 101.50 A3.6 3.6 0 0 1 11.55 97.90 M17.73 86.45 H20.43 M17.73 101.50 H20.43 M11.55 92.63 V95.33 M26.60 92.63 V95.33" fill="none" stroke="#c4c4c4" stroke-width="1.5" stroke-linecap="round"/>
<path d="M26.3 122.5 L27.2 123.2 L18.0 136.3 L15.5 134.2 Z" fill="#efefef"/>
<path d="M14.8 135.0 L17.2 137.0 C17.2 139.6 14.4 140.4 9.8 140.4 C11.6 139.2 11.2 136.0 14.8 135.0 Z" fill="#efefef"/>
<g transform="translate(18.8,169.7) rotate(-45)" fill="#b6b6b6"><rect x="-8.7" y="-4.3" width="5.1" height="8.6" rx="1"/><rect x="-2.4" y="-4.3" width="11.1" height="8.6" rx="1"/></g>
<path d="M14.2 200.6 C15.6 198.6 18.4 198.2 20 198.9 C21.8 197.7 24.4 197.9 25.6 199.3 C27.4 200 28.2 202 27.6 204 C28 206.4 26.8 208.6 24.8 209.6 C23.6 211.8 21 212.6 19.2 211.4 L17.4 209 L14.6 205.4 C13.2 204.2 13.2 202 14.2 200.6 Z" fill="#b6b6b6"/>
<path d="M19.6 207.4 L11.9 213.3" stroke="#b6b6b6" stroke-width="4.3" stroke-linecap="round"/>
<g transform="translate(18.0,244.9) rotate(45)"><rect x="-5.5" y="-5.5" width="11" height="11" rx="1.4" fill="#b6b6b6"/></g>
<path d="M23.4 241.8 C26.8 241.6 29 243.6 28.8 247 C28.7 249.4 28.1 250.8 26.9 250.8 C25.5 250.8 25.4 249.3 25.6 247.7 C25.8 246.3 25.2 245.3 24.2 245 Z" fill="#b6b6b6"/>
<path d="M18.8 234 V238.2" stroke="#b6b6b6" stroke-width="2.2"/>
<path d="M18.8 238 V244.6" stroke="#1e1e1e" stroke-width="2.2" stroke-linecap="round"/>
<g transform="translate(19,281.9) rotate(45)"><path d="M-1.8 -1.5 V7.5 L0 10.6 L1.8 7.5 V-1.5" fill="none" stroke="#b6b6b6" stroke-width="1.1" stroke-linejoin="round"/><rect x="-3.4" y="-4" width="6.8" height="2.2" rx="0.6" fill="#b6b6b6"/><rect x="-1.9" y="-11" width="3.8" height="8" rx="1.6" fill="#b6b6b6"/></g>
<text x="19.3" y="327.4" font-family="Liberation Serif, serif" font-size="23.6" fill="#b6b6b6" text-anchor="middle">T</text>
<g transform="translate(19.6,356.6) rotate(45)"><path d="M0 12 L-5.4 1.5 L-3.6 -4 L3.6 -4 L5.4 1.5 Z" fill="#b6b6b6"/><path d="M0 12 V3" stroke="#1e1e1e" stroke-width="0.9"/><circle cx="0" cy="2.3" r="1.3" fill="#1e1e1e"/><rect x="-4.4" y="-9.6" width="8.8" height="4" rx="1.1" fill="#b6b6b6"/></g></svg>
<!-- right toolbar -->
<svg class="abs" style="left:0;top:0" width="1024" height="768" viewBox="0 0 1024 768"><circle cx="1004.8" cy="56.4" r="11" fill="#000" stroke="#8c8c8c" stroke-width="1"/>
<path d="M1004.8 84.8 L1014.5 91.3 L1004.8 98.2 L995.1 91.3 Z" fill="#b6b6b6"/>
<path d="M995.1 96.3 L997.5 94.6 L1004.8 99.9 L1012.1 94.6 L1014.5 96.3 L1004.8 103.5 Z" fill="#b6b6b6"/>
<g stroke="#c6c6c6" stroke-width="1.7" fill="none" stroke-linecap="round"><path d="M996.6 127.4 H1004.6 M1011 127.4 H1013.2"/><circle cx="1007.8" cy="127.4" r="2.9"/><path d="M996.6 135.6 H998.9 M1005.6 135.6 H1013.2"/><circle cx="1002.5" cy="135.6" r="2.9"/></g>
<g stroke="#c6c6c6" stroke-width="1.4" fill="none" stroke-linecap="round" stroke-linejoin="round"><path d="M996.2 163 H1013.6"/><path d="M1001.7 162.8 V161.6 Q1001.7 160.4 1002.9 160.4 H1006.9 Q1008.1 160.4 1008.1 161.6 V162.8"/><path d="M998.2 163.8 L999.5 174.8 Q999.7 176.4 1001.3 176.4 H1008.5 Q1010.1 176.4 1010.3 174.8 L1011.6 163.8"/></g>
<g stroke="#9a9a9a" stroke-width="1.1"><path d="M1003 165.6 V174 M1004.8 165.6 V174 M1006.6 165.6 V174"/></g>
<path d="M999.6 309.2 H1009 A4.4 4.4 0 0 1 1009 318 H1003.2" fill="none" stroke="#c6c6c6" stroke-width="1.9"/>
<path d="M996.4 309.2 L1000.2 305.6 V312.8 Z" fill="#c6c6c6"/>
<path d="M1010.4 346.8 H1001 A4.35 4.35 0 0 0 1001 355.5 H1007" fill="none" stroke="#6a6a6a" stroke-width="1.5"/>
<path d="M1013.4 346.8 L1009.8 343.4 V350.2 Z" fill="#6a6a6a"/></svg>
<!-- bottom -->
<svg class="abs" style="left:0;top:0" width="1024" height="768" viewBox="0 0 1024 768"><path d="M9.60 580.90 L20.40 573.40 L20.40 588.80 Z" fill="#b6b6b6" stroke="#b6b6b6" stroke-width="1.6" stroke-linejoin="round"/>
<rect x="23.5" y="572.5" width="3.5" height="17.2" rx="1.6" fill="#b6b6b6"/>
<rect x="48.8" y="572.5" width="3.5" height="17.2" rx="1.6" fill="#b6b6b6"/>
<path d="M66.10 580.90 L55.20 573.40 L55.20 588.80 Z" fill="#b6b6b6" stroke="#b6b6b6" stroke-width="1.6" stroke-linejoin="round"/>
<rect x="230.2" y="564.7" width="32.8" height="32.8" rx="3.6" fill="#3a4f58"/>
<rect x="267.9" y="564.7" width="33" height="32.8" rx="3.6" fill="#3a4f58"/>
<path d="M254.5 571.1 C254.2 571.3 253.6 572.1 253.1 572.4 C252.5 572.8 251.9 573.2 251.1 573.4 C250.4 573.7 249.4 573.8 248.4 574.0 C247.4 574.2 246.3 574.2 245.3 574.4 C244.3 574.6 243.5 574.9 242.5 575.4 C241.6 575.9 240.5 576.5 239.8 577.3 C239.1 578.1 238.6 579.2 238.2 580.1 C237.9 581.0 237.8 581.9 237.9 582.8 C237.9 583.7 238.2 584.8 238.4 585.5 C238.7 586.2 239.3 586.8 239.4 587.1 L237.86 587.48 L238.05 588.66 L239.42 589.05 L240.40 589.44 L241.77 590.22 L242.74 589.44 L242.7 589.4 C243.2 589.5 244.4 589.9 245.3 589.8 C246.2 589.8 247.2 589.6 248.0 589.2 C248.9 588.9 249.6 588.5 250.4 587.9 C251.1 587.3 251.8 586.4 252.3 585.5 C252.9 584.6 253.3 583.4 253.7 582.4 C254.0 581.4 254.2 580.3 254.5 579.3 C254.7 578.3 254.9 577.4 255.2 576.5 C255.5 575.7 255.9 574.9 256.2 574.2 C256.5 573.5 256.9 572.7 257.0 572.4 L255.44 572.72 Z" fill="#efefef"/>
<path d="M240.2 580.5 C240.8 578.4 242.4 576.9 244.5 576.2" fill="none" stroke="#3a4f58" stroke-width="0.65" stroke-linecap="round"/>
<g fill="none" stroke="#efefef" stroke-width="2.4" stroke-linecap="round"><path d="M276.1 584 A5.9 5.9 0 0 1 281.2 575.5 H284.6"/><path d="M292.4 578.3 A5.9 5.9 0 0 1 287.4 587 H284"/></g>
<path d="M284.3 571.9 L289.9 575.3 L284.7 579.1 Z" fill="#efefef" stroke="#efefef" stroke-width="0.6" stroke-linejoin="round"/>
<path d="M284.4 583.3 L278.9 587 L284 590.4 Z" fill="#efefef" stroke="#efefef" stroke-width="0.6" stroke-linejoin="round"/>
<path d="M465.00 581.10 L473.60 575.40 L473.60 586.80 Z" fill="#b6b6b6" stroke="#b6b6b6" stroke-width="1.6" stroke-linejoin="round"/>
<path d="M475.20 581.10 L483.70 575.40 L483.70 586.80 Z" fill="#b6b6b6" stroke="#b6b6b6" stroke-width="1.6" stroke-linejoin="round"/>
<path d="M506.60 573.20 L519.30 581.10 L506.60 589.00 Z" fill="#b6b6b6" stroke="#b6b6b6" stroke-width="1.6" stroke-linejoin="round"/>
<path d="M540.30 575.40 L548.90 581.10 L540.30 586.80 Z" fill="#b6b6b6" stroke="#b6b6b6" stroke-width="1.6" stroke-linejoin="round"/>
<path d="M550.40 575.40 L558.90 581.10 L550.40 586.80 Z" fill="#b6b6b6" stroke="#b6b6b6" stroke-width="1.6" stroke-linejoin="round"/>
<rect x="996.6" y="572.3" width="16.8" height="2.9" rx="1.45" fill="#b6b6b6"/>
<path d="M997.40 578.60 L1012.60 578.60 L1005.00 589.20 Z" fill="#b6b6b6" stroke="#b6b6b6" stroke-width="1.6" stroke-linejoin="round"/></svg>
<div class="t" style="left:732px;top:574px;font-size:12.5px;color:#c8c8c8;letter-spacing:-0.3px">Squid</div>
<div class="t" style="left:789px;top:574px;font-size:12.5px;color:#c8c8c8;letter-spacing:0.1px">24 fps</div>
<div class="abs row" style="top:622.5px"></div>
<div class="abs row sel" style="top:660px"></div>
<div class="abs row" style="top:697.5px"></div>
<div class="t lbl" style="top:634.6px">Bubbles</div>
<div class="t lbl" style="top:672.1px">Body</div>
<div class="t lbl" style="top:709.6px">Background</div>
<svg class="abs" style="left:0;top:0" width="1024" height="768" viewBox="0 0 1024 768"><path d="M132.40 640.90 Q140.40 629.30 148.40 640.90 Q140.40 652.50 132.40 640.90 Z" fill="none" stroke="#efefef" stroke-width="1.35" stroke-linejoin="round"/><circle cx="140.40" cy="640.90" r="3.85" fill="#efefef"/>
<path d="M132.40 678.40 Q140.40 666.80 148.40 678.40 Q140.40 690.00 132.40 678.40 Z" fill="none" stroke="#efefef" stroke-width="1.35" stroke-linejoin="round"/><circle cx="140.40" cy="678.40" r="3.85" fill="#efefef"/>
<path d="M132.40 715.90 Q140.40 704.30 148.40 715.90 Q140.40 727.50 132.40 715.90 Z" fill="none" stroke="#efefef" stroke-width="1.35" stroke-linejoin="round"/><circle cx="140.40" cy="715.90" r="3.85" fill="#efefef"/>
<g transform="translate(118,641) scale(0.47) translate(-247.2,-580.9)"><path d="M254.5 571.1 C254.2 571.3 253.6 572.1 253.1 572.4 C252.5 572.8 251.9 573.2 251.1 573.4 C250.4 573.7 249.4 573.8 248.4 574.0 C247.4 574.2 246.3 574.2 245.3 574.4 C244.3 574.6 243.5 574.9 242.5 575.4 C241.6 575.9 240.5 576.5 239.8 577.3 C239.1 578.1 238.6 579.2 238.2 580.1 C237.9 581.0 237.8 581.9 237.9 582.8 C237.9 583.7 238.2 584.8 238.4 585.5 C238.7 586.2 239.3 586.8 239.4 587.1 L237.86 587.48 L238.05 588.66 L239.42 589.05 L240.40 589.44 L241.77 590.22 L242.74 589.44 L242.7 589.4 C243.2 589.5 244.4 589.9 245.3 589.8 C246.2 589.8 247.2 589.6 248.0 589.2 C248.9 588.9 249.6 588.5 250.4 587.9 C251.1 587.3 251.8 586.4 252.3 585.5 C252.9 584.6 253.3 583.4 253.7 582.4 C254.0 581.4 254.2 580.3 254.5 579.3 C254.7 578.3 254.9 577.4 255.2 576.5 C255.5 575.7 255.9 574.9 256.2 574.2 C256.5 573.5 256.9 572.7 257.0 572.4 L255.44 572.72 Z" fill="#efefef"/></g>
<path d="M11.8 751.2 H22.6 M17.2 745.8 V756.6" stroke="#c4c4c4" stroke-width="1.2"/></svg>
<svg class="abs" style="left:0;top:0" width="1024" height="768" viewBox="0 0 1024 768">
<defs><pattern id="ck" width="7.5" height="7.5" patternUnits="userSpaceOnUse"><rect x="3.75" y="0" width="3.75" height="3.75" fill="#d6d6d6"/><rect x="0" y="3.75" width="3.75" height="3.75" fill="#d6d6d6"/></pattern></defs>
<rect x="166" y="622.2" width="858" height="113.0" fill="#141414"/>
<rect x="166" y="600" width="825" height="22.2" fill="#3c5059"/>
<rect x="164.95" y="618.4" width="1.9" height="3.9" fill="#f0f0f0"/>
<rect x="192.80" y="618.6" width="1.2" height="3.7" fill="#a9b6ba"/>
<rect x="220.30" y="618.6" width="1.2" height="3.7" fill="#a9b6ba"/>
<rect x="247.80" y="618.6" width="1.2" height="3.7" fill="#a9b6ba"/>
<rect x="274.95" y="618.4" width="1.9" height="3.9" fill="#f0f0f0"/>
<rect x="302.80" y="618.6" width="1.2" height="3.7" fill="#a9b6ba"/>
<rect x="330.30" y="618.6" width="1.2" height="3.7" fill="#a9b6ba"/>
<rect x="357.80" y="618.6" width="1.2" height="3.7" fill="#a9b6ba"/>
<rect x="384.95" y="618.4" width="1.9" height="3.9" fill="#f0f0f0"/>
<rect x="412.80" y="618.6" width="1.2" height="3.7" fill="#a9b6ba"/>
<rect x="440.30" y="618.6" width="1.2" height="3.7" fill="#a9b6ba"/>
<rect x="467.80" y="618.6" width="1.2" height="3.7" fill="#a9b6ba"/>
<rect x="494.95" y="618.4" width="1.9" height="3.9" fill="#f0f0f0"/>
<rect x="522.80" y="618.6" width="1.2" height="3.7" fill="#a9b6ba"/>
<rect x="550.30" y="618.6" width="1.2" height="3.7" fill="#a9b6ba"/>
<rect x="577.80" y="618.6" width="1.2" height="3.7" fill="#a9b6ba"/>
<rect x="604.95" y="618.4" width="1.9" height="3.9" fill="#f0f0f0"/>
<rect x="632.80" y="618.6" width="1.2" height="3.7" fill="#a9b6ba"/>
<rect x="660.30" y="618.6" width="1.2" height="3.7" fill="#a9b6ba"/>
<rect x="687.80" y="618.6" width="1.2" height="3.7" fill="#a9b6ba"/>
<rect x="714.95" y="618.4" width="1.9" height="3.9" fill="#f0f0f0"/>
<rect x="742.80" y="618.6" width="1.2" height="3.7" fill="#a9b6ba"/>
<rect x="770.30" y="618.6" width="1.2" height="3.7" fill="#a9b6ba"/>
<rect x="797.80" y="618.6" width="1.2" height="3.7" fill="#a9b6ba"/>
<rect x="824.95" y="618.4" width="1.9" height="3.9" fill="#f0f0f0"/>
<rect x="852.80" y="618.6" width="1.2" height="3.7" fill="#a9b6ba"/>
<rect x="880.30" y="618.6" width="1.2" height="3.7" fill="#a9b6ba"/>
<rect x="907.80" y="618.6" width="1.2" height="3.7" fill="#a9b6ba"/>
<rect x="934.95" y="618.4" width="1.9" height="3.9" fill="#f0f0f0"/>
<rect x="962.80" y="618.6" width="1.2" height="3.7" fill="#a9b6ba"/>
<rect x="990.30" y="618.6" width="1.2" height="3.7" fill="#a9b6ba"/>
<rect x="1017.80" y="618.6" width="1.2" height="3.7" fill="#8a8a8a"/>
<text x="179.95" y="614.9" font-size="10.8" fill="#c3cbce" text-anchor="middle" font-family="Liberation Sans, sans-serif">1</text>
<text x="207.45" y="614.9" font-size="10.8" fill="#c3cbce" text-anchor="middle" font-family="Liberation Sans, sans-serif">2</text>
<text x="234.95" y="614.9" font-size="10.8" fill="#c3cbce" text-anchor="middle" font-family="Liberation Sans, sans-serif">3</text>
<text x="262.45" y="614.9" font-size="10.8" fill="#c3cbce" text-anchor="middle" font-family="Liberation Sans, sans-serif">4</text>
<text x="289.95" y="614.9" font-size="10.8" fill="#c3cbce" text-anchor="middle" font-family="Liberation Sans, sans-serif">5</text>
<text x="317.45" y="614.9" font-size="10.8" fill="#c3cbce" text-anchor="middle" font-family="Liberation Sans, sans-serif">6</text>
<text x="344.95" y="614.9" font-size="10.8" fill="#c3cbce" text-anchor="middle" font-family="Liberation Sans, sans-serif">7</text>
<text x="372.45" y="614.9" font-size="10.8" fill="#c3cbce" text-anchor="middle" font-family="Liberation Sans, sans-serif">8</text>
<text x="399.95" y="614.9" font-size="10.8" fill="#c3cbce" text-anchor="middle" font-family="Liberation Sans, sans-serif">9</text>
<text x="482.45" y="614.9" font-size="10.8" fill="#c3cbce" text-anchor="middle" font-family="Liberation Sans, sans-serif">12</text>
<text x="537.45" y="614.9" font-size="10.8" fill="#c3cbce" text-anchor="middle" font-family="Liberation Sans, sans-serif">14</text>
<text x="592.45" y="614.9" font-size="10.8" fill="#c3cbce" text-anchor="middle" font-family="Liberation Sans, sans-serif">16</text>
<text x="647.45" y="614.9" font-size="10.8" fill="#c3cbce" text-anchor="middle" font-family="Liberation Sans, sans-serif">18</text>
<text x="702.45" y="614.9" font-size="10.8" fill="#c3cbce" text-anchor="middle" font-family="Liberation Sans, sans-serif">20</text>
<text x="757.45" y="614.9" font-size="10.8" fill="#c3cbce" text-anchor="middle" font-family="Liberation Sans, sans-serif">22</text>
<text x="812.45" y="614.9" font-size="10.8" fill="#c3cbce" text-anchor="middle" font-family="Liberation Sans, sans-serif">24</text>
<text x="867.45" y="614.9" font-size="10.8" fill="#c3cbce" text-anchor="middle" font-family="Liberation Sans, sans-serif">26</text>
<text x="922.45" y="614.9" font-size="10.8" fill="#c3cbce" text-anchor="middle" font-family="Liberation Sans, sans-serif">28</text>
<text x="977.45" y="614.9" font-size="10.8" fill="#c3cbce" text-anchor="middle" font-family="Liberation Sans, sans-serif">30</text>
<rect x="166" y="696.9" width="825" height="38.1" rx="3" fill="#fff"/>
<g transform="translate(578.90,622.20)"><rect x="0" y="0" width="27.10" height="38.40" rx="2" fill="#fff"/><rect x="0" y="0" width="27.10" height="38.40" rx="2" fill="url(#ck)"/></g>
<g transform="translate(606.40,622.20)"><rect x="0" y="0" width="27.10" height="38.40" rx="2" fill="#fff"/><rect x="0" y="0" width="27.10" height="38.40" rx="2" fill="url(#ck)"/></g>
<g transform="translate(633.90,622.20)"><rect x="0" y="0" width="27.10" height="38.40" rx="2" fill="#fff"/><rect x="0" y="0" width="27.10" height="38.40" rx="2" fill="url(#ck)"/></g>
<g transform="translate(661.40,622.20)"><rect x="0" y="0" width="27.10" height="38.40" rx="2" fill="#fff"/><rect x="0" y="0" width="27.10" height="38.40" rx="2" fill="url(#ck)"/></g>
<g transform="translate(688.90,622.20)"><rect x="0" y="0" width="27.10" height="38.40" rx="2" fill="#fff"/><rect x="0" y="0" width="27.10" height="38.40" rx="2" fill="url(#ck)"/></g>
<g transform="translate(716.40,622.20)"><rect x="0" y="0" width="27.10" height="38.40" rx="2" fill="#fff"/><rect x="0" y="0" width="27.10" height="38.40" rx="2" fill="url(#ck)"/></g>
<g transform="translate(743.90,622.20)"><rect x="0" y="0" width="27.10" height="38.40" rx="2" fill="#fff"/><rect x="0" y="0" width="27.10" height="38.40" rx="2" fill="url(#ck)"/></g>
<g transform="translate(771.40,622.20)"><rect x="0" y="0" width="27.10" height="38.40" rx="2" fill="#fff"/><rect x="0" y="0" width="27.10" height="38.40" rx="2" fill="url(#ck)"/></g>
<g transform="translate(798.90,622.20)"><rect x="0" y="0" width="27.10" height="38.40" rx="2" fill="#fff"/><rect x="0" y="0" width="27.10" height="38.40" rx="2" fill="url(#ck)"/></g>
<g transform="translate(826.40,622.20)"><rect x="0" y="0" width="27.10" height="38.40" rx="2" fill="#fff"/><rect x="0" y="0" width="27.10" height="38.40" rx="2" fill="url(#ck)"/></g>
<g transform="translate(853.90,622.20)"><rect x="0" y="0" width="27.10" height="38.40" rx="2" fill="#fff"/><rect x="0" y="0" width="27.10" height="38.40" rx="2" fill="url(#ck)"/></g>
<g transform="translate(881.40,622.20)"><rect x="0" y="0" width="27.10" height="38.40" rx="2" fill="#fff"/><rect x="0" y="0" width="27.10" height="38.40" rx="2" fill="url(#ck)"/></g>
<g transform="translate(166.40,659.60)"><rect x="0" y="0" width="27.10" height="37.40" rx="2" fill="#fff"/><rect x="0" y="0" width="27.10" height="37.40" rx="2" fill="url(#ck)"/></g>
<g transform="translate(358.90,659.60)"><rect x="0" y="0" width="27.10" height="37.40" rx="2" fill="#fff"/><rect x="0" y="0" width="27.10" height="37.40" rx="2" fill="url(#ck)"/></g>
<g transform="translate(386.40,659.60)"><rect x="0" y="0" width="27.10" height="37.40" rx="2" fill="#fff"/><rect x="0" y="0" width="27.10" height="37.40" rx="2" fill="url(#ck)"/></g>
<g transform="translate(441.40,659.60)"><rect x="0" y="0" width="27.10" height="37.40" rx="2" fill="#fff"/><rect x="0" y="0" width="27.10" height="37.40" rx="2" fill="url(#ck)"/></g>
<g transform="translate(468.90,659.60)"><rect x="0" y="0" width="27.10" height="37.40" rx="2" fill="#fff"/><rect x="0" y="0" width="27.10" height="37.40" rx="2" fill="url(#ck)"/></g>
<g transform="translate(523.90,659.60)"><rect x="0" y="0" width="27.10" height="37.40" rx="2" fill="#fff"/><rect x="0" y="0" width="27.10" height="37.40" rx="2" fill="url(#ck)"/></g>
<g transform="translate(551.40,659.60)"><rect x="0" y="0" width="27.10" height="37.40" rx="2" fill="#fff"/><rect x="0" y="0" width="27.10" height="37.40" rx="2" fill="url(#ck)"/></g>
<g transform="translate(578.90,659.60)"><rect x="0" y="0" width="27.10" height="37.40" rx="2" fill="#fff"/><rect x="0" y="0" width="27.10" height="37.40" rx="2" fill="url(#ck)"/></g>
<g transform="translate(606.40,659.60)"><rect x="0" y="0" width="27.10" height="37.40" rx="2" fill="#fff"/><rect x="0" y="0" width="27.10" height="37.40" rx="2" fill="url(#ck)"/></g>
<g transform="translate(633.90,659.60)"><rect x="0" y="0" width="27.10" height="37.40" rx="2" fill="#fff"/><rect x="0" y="0" width="27.10" height="37.40" rx="2" fill="url(#ck)"/></g>
<g transform="translate(661.40,659.60)"><rect x="0" y="0" width="27.10" height="37.40" rx="2" fill="#fff"/><rect x="0" y="0" width="27.10" height="37.40" rx="2" fill="url(#ck)"/></g>
<g transform="translate(688.90,659.60)"><rect x="0" y="0" width="27.10" height="37.40" rx="2" fill="#fff"/><rect x="0" y="0" width="27.10" height="37.40" rx="2" fill="url(#ck)"/></g>
<g transform="translate(716.40,659.60)"><rect x="0" y="0" width="27.10" height="37.40" rx="2" fill="#fff"/><rect x="0" y="0" width="27.10" height="37.40" rx="2" fill="url(#ck)"/></g>
<g transform="translate(743.90,659.60)"><rect x="0" y="0" width="27.10" height="37.40" rx="2" fill="#fff"/><rect x="0" y="0" width="27.10" height="37.40" rx="2" fill="url(#ck)"/></g>
<g transform="translate(771.40,659.60)"><rect x="0" y="0" width="27.10" height="37.40" rx="2" fill="#fff"/><rect x="0" y="0" width="27.10" height="37.40" rx="2" fill="url(#ck)"/></g>
<g transform="translate(798.90,659.60)"><rect x="0" y="0" width="27.10" height="37.40" rx="2" fill="#fff"/><rect x="0" y="0" width="27.10" height="37.40" rx="2" fill="url(#ck)"/></g>
<g transform="translate(826.40,659.60)"><rect x="0" y="0" width="27.10" height="37.40" rx="2" fill="#fff"/><rect x="0" y="0" width="27.10" height="37.40" rx="2" fill="url(#ck)"/></g>
<g transform="translate(853.90,659.60)"><rect x="0" y="0" width="27.10" height="37.40" rx="2" fill="#fff"/><rect x="0" y="0" width="27.10" height="37.40" rx="2" fill="url(#ck)"/></g>
<g transform="translate(881.40,659.60)"><rect x="0" y="0" width="27.10" height="37.40" rx="2" fill="#fff"/><rect x="0" y="0" width="27.10" height="37.40" rx="2" fill="url(#ck)"/></g>
<g transform="translate(908.90,659.60)"><rect x="0" y="0" width="27.10" height="37.40" rx="2" fill="#fff"/><rect x="0" y="0" width="27.10" height="37.40" rx="2" fill="url(#ck)"/></g>
<g transform="translate(936.40,659.60)"><rect x="0" y="0" width="27.10" height="37.40" rx="2" fill="#fff"/><rect x="0" y="0" width="27.10" height="37.40" rx="2" fill="url(#ck)"/></g>
<g transform="translate(963.90,659.60)"><rect x="0" y="0" width="27.10" height="37.40" rx="2" fill="#fff"/><rect x="0" y="0" width="27.10" height="37.40" rx="2" fill="url(#ck)"/></g>
<rect x="193.50" y="659.60" width="165.00" height="37.40" fill="#6f6f6f"/>
<rect x="496.00" y="659.60" width="27.50" height="37.40" fill="#6f6f6f"/>
<path d="M194.0 687.2 C201.5 681.6 209.5 673.6 219.5 670.6 C229.5 667.6 245.5 665.6 248.5 673.1 C249.5 680.6 237.5 683.1 225.5 684.2 C215.5 685.0 203.5 686.6 194.0 687.6" fill="none" stroke="#454545" stroke-width="0.6"/><path d="M195.5 687.1 L215.5 678.6 M197.5 688.2 L217.5 682.1 M201.5 688.6 L218.5 684.1" stroke="#454545" stroke-width="0.48" fill="none"/><circle cx="223.0" cy="678.6" r="4.6" fill="none" stroke="#454545" stroke-width="0.6"/><path d="M219.1 679.8 l0.4 -3 l1.2 -0.8 l1 1.6 l1 -2.6 l1.2 0 l0.8 2.6 l1.2 -1.4 l1.2 0.8 l0 3 l-1.6 1.8 l-2 -0.6 l-2.2 0.6 z" fill="#0a0a0a"/>
<path d="M249.0 687.2 C256.5 681.6 264.5 673.6 274.5 670.6 C284.5 667.6 300.5 665.6 303.5 673.1 C304.5 680.6 292.5 683.1 280.5 684.2 C270.5 685.0 258.5 686.6 249.0 687.6" fill="none" stroke="#454545" stroke-width="0.6"/><path d="M250.5 687.1 L270.5 678.6 M252.5 688.2 L272.5 682.1 M256.5 688.6 L273.5 684.1" stroke="#454545" stroke-width="0.48" fill="none"/><circle cx="278.0" cy="678.6" r="4.6" fill="none" stroke="#454545" stroke-width="0.6"/><path d="M274.1 679.8 l0.4 -3 l1.2 -0.8 l1 1.6 l1 -2.6 l1.2 0 l0.8 2.6 l1.2 -1.4 l1.2 0.8 l0 3 l-1.6 1.8 l-2 -0.6 l-2.2 0.6 z" fill="#0a0a0a"/>
<path d="M304.0 687.2 C311.5 681.6 319.5 673.6 329.5 670.6 C339.5 667.6 355.5 665.6 358.5 673.1 C359.5 680.6 347.5 683.1 335.5 684.2 C325.5 685.0 313.5 686.6 304.0 687.6" fill="none" stroke="#454545" stroke-width="0.6"/><path d="M305.5 687.1 L325.5 678.6 M307.5 688.2 L327.5 682.1 M311.5 688.6 L328.5 684.1" stroke="#454545" stroke-width="0.48" fill="none"/><circle cx="333.0" cy="678.6" r="4.6" fill="none" stroke="#454545" stroke-width="0.6"/><path d="M329.1 679.8 l0.4 -3 l1.2 -0.8 l1 1.6 l1 -2.6 l1.2 0 l0.8 2.6 l1.2 -1.4 l1.2 0.8 l0 3 l-1.6 1.8 l-2 -0.6 l-2.2 0.6 z" fill="#0a0a0a"/>
<path d="M507 662 C512 668 505 676 511 682 C514 688 510 692 512 696 M503 676 C508 678 512 676 516 681 M516 664 C512 670 516 676 514 682" fill="none" stroke="#5c5c5c" stroke-width="0.6"/>
<rect x="520.8" y="677.6" width="2.6" height="4" fill="#111"/>
<ellipse cx="180.0" cy="678.2" rx="1.6" ry="1.25" fill="#0a0a0a"/>
<ellipse cx="373.3" cy="676.8" rx="1.6" ry="1.25" fill="#0a0a0a"/>
<ellipse cx="400.8" cy="675.6" rx="1.6" ry="1.25" fill="#0a0a0a"/>
<ellipse cx="426.8" cy="677.0" rx="1.6" ry="1.25" fill="#0a0a0a"/>
<ellipse cx="454.3" cy="677.6" rx="1.6" ry="1.25" fill="#0a0a0a"/>
<ellipse cx="482.4" cy="679.0" rx="1.6" ry="1.25" fill="#0a0a0a"/>
<ellipse cx="536.7" cy="677.0" rx="1.6" ry="1.25" fill="#0a0a0a"/>
<ellipse cx="565.0" cy="678.0" rx="1.6" ry="1.25" fill="#0a0a0a"/>
<ellipse cx="584.6" cy="680.2" rx="2.0" ry="1.25" fill="#0a0a0a"/>
<ellipse cx="750.8" cy="675.0" rx="1.6" ry="1.25" fill="#0a0a0a"/>
<ellipse cx="780.0" cy="675.0" rx="1.6" ry="1.25" fill="#0a0a0a"/>
<ellipse cx="809.5" cy="676.0" rx="1.6" ry="1.25" fill="#0a0a0a"/>
<ellipse cx="838.2" cy="676.5" rx="1.6" ry="1.25" fill="#0a0a0a"/>
<ellipse cx="866.4" cy="677.0" rx="2.0" ry="1.25" fill="#0a0a0a"/>
<ellipse cx="894.3" cy="677.3" rx="2.0" ry="1.25" fill="#0a0a0a"/>
<ellipse cx="922.7" cy="677.8" rx="1.6" ry="1.25" fill="#0a0a0a"/>
<ellipse cx="950.6" cy="678.4" rx="1.6" ry="1.25" fill="#0a0a0a"/>
<ellipse cx="978.8" cy="678.4" rx="1.6" ry="1.25" fill="#0a0a0a"/>
<ellipse cx="611.5" cy="680.2" rx="2.6" ry="2" fill="#222" opacity="0.55"/>
<ellipse cx="638.5" cy="680.0" rx="2.6" ry="2" fill="#222" opacity="0.3"/>
<ellipse cx="666.0" cy="680.6" rx="2.6" ry="2" fill="#222" opacity="0.22"/>
<ellipse cx="718.0" cy="679.0" rx="2.6" ry="2" fill="#222" opacity="0.18"/>
<path d="M526.5 681.6 C532.5 672.6 543.5 670.6 550.0 673.6" fill="none" stroke="#9a9a9a" stroke-width="0.5" stroke-dasharray="3 1.5" opacity="0.8"/>
<path d="M524.5 680.6 C531.5 684.6 541.5 683.6 549.5 678.6" fill="none" stroke="#a5a5a5" stroke-width="0.5" stroke-dasharray="2 2" opacity="0.8"/>
<path d="M554.0 681.6 C560.0 672.6 571.0 670.6 577.5 673.6" fill="none" stroke="#9a9a9a" stroke-width="0.5" stroke-dasharray="3 1.5" opacity="0.8"/>
<path d="M552.0 680.6 C559.0 684.6 569.0 683.6 577.0 678.6" fill="none" stroke="#a5a5a5" stroke-width="0.5" stroke-dasharray="2 2" opacity="0.8"/>
<path d="M581.5 681.6 C587.5 672.6 598.5 670.6 605.0 673.6" fill="none" stroke="#9a9a9a" stroke-width="0.5" stroke-dasharray="3 1.5" opacity="0.8"/>
<path d="M579.5 680.6 C586.5 684.6 596.5 683.6 604.5 678.6" fill="none" stroke="#a5a5a5" stroke-width="0.5" stroke-dasharray="2 2" opacity="0.8"/>
<path d="M609.0 681.6 C615.0 672.6 626.0 670.6 632.5 673.6" fill="none" stroke="#9a9a9a" stroke-width="0.5" stroke-dasharray="3 1.5" opacity="0.8"/>
<path d="M607.0 680.6 C614.0 684.6 624.0 683.6 632.0 678.6" fill="none" stroke="#a5a5a5" stroke-width="0.5" stroke-dasharray="2 2" opacity="0.8"/>
<path d="M636.5 681.6 C642.5 672.6 653.5 670.6 660.0 673.6" fill="none" stroke="#9a9a9a" stroke-width="0.5" stroke-dasharray="3 1.5" opacity="0.8"/>
<path d="M634.5 680.6 C641.5 684.6 651.5 683.6 659.5 678.6" fill="none" stroke="#a5a5a5" stroke-width="0.5" stroke-dasharray="2 2" opacity="0.8"/>
<path d="M664.0 681.6 C670.0 672.6 681.0 670.6 687.5 673.6" fill="none" stroke="#9a9a9a" stroke-width="0.5" stroke-dasharray="3 1.5" opacity="0.8"/>
<path d="M662.0 680.6 C669.0 684.6 679.0 683.6 687.0 678.6" fill="none" stroke="#a5a5a5" stroke-width="0.5" stroke-dasharray="2 2" opacity="0.8"/>
<path d="M691.5 681.6 C697.5 672.6 708.5 670.6 715.0 673.6" fill="none" stroke="#9a9a9a" stroke-width="0.5" stroke-dasharray="3 1.5" opacity="0.8"/>
<path d="M689.5 680.6 C696.5 684.6 706.5 683.6 714.5 678.6" fill="none" stroke="#a5a5a5" stroke-width="0.5" stroke-dasharray="2 2" opacity="0.8"/>
<path d="M719.0 681.6 C725.0 672.6 736.0 670.6 742.5 673.6" fill="none" stroke="#9a9a9a" stroke-width="0.5" stroke-dasharray="3 1.5" opacity="0.8"/>
<path d="M717.0 680.6 C724.0 684.6 734.0 683.6 742.0 678.6" fill="none" stroke="#a5a5a5" stroke-width="0.5" stroke-dasharray="2 2" opacity="0.8"/>
<path d="M746.5 681.6 C752.5 672.6 763.5 670.6 770.0 673.6" fill="none" stroke="#9a9a9a" stroke-width="0.5" stroke-dasharray="3 1.5" opacity="0.8"/>
<path d="M744.5 680.6 C751.5 684.6 761.5 683.6 769.5 678.6" fill="none" stroke="#a5a5a5" stroke-width="0.5" stroke-dasharray="2 2" opacity="0.8"/>
<path d="M774.0 681.6 C780.0 672.6 791.0 670.6 797.5 673.6" fill="none" stroke="#9a9a9a" stroke-width="0.5" stroke-dasharray="3 1.5" opacity="0.8"/>
<path d="M772.0 680.6 C779.0 684.6 789.0 683.6 797.0 678.6" fill="none" stroke="#a5a5a5" stroke-width="0.5" stroke-dasharray="2 2" opacity="0.8"/>
<path d="M801.5 681.6 C807.5 672.6 818.5 670.6 825.0 673.6" fill="none" stroke="#9a9a9a" stroke-width="0.5" stroke-dasharray="3 1.5" opacity="0.8"/>
<path d="M799.5 680.6 C806.5 684.6 816.5 683.6 824.5 678.6" fill="none" stroke="#a5a5a5" stroke-width="0.5" stroke-dasharray="2 2" opacity="0.8"/>
<path d="M829.0 681.6 C835.0 672.6 846.0 670.6 852.5 673.6" fill="none" stroke="#9a9a9a" stroke-width="0.5" stroke-dasharray="3 1.5" opacity="0.8"/>
<path d="M827.0 680.6 C834.0 684.6 844.0 683.6 852.0 678.6" fill="none" stroke="#a5a5a5" stroke-width="0.5" stroke-dasharray="2 2" opacity="0.8"/>
<path d="M856.5 681.6 C862.5 672.6 873.5 670.6 880.0 673.6" fill="none" stroke="#9a9a9a" stroke-width="0.5" stroke-dasharray="3 1.5" opacity="0.8"/>
<path d="M854.5 680.6 C861.5 684.6 871.5 683.6 879.5 678.6" fill="none" stroke="#a5a5a5" stroke-width="0.5" stroke-dasharray="2 2" opacity="0.8"/>
<path d="M884.0 681.6 C890.0 672.6 901.0 670.6 907.5 673.6" fill="none" stroke="#9a9a9a" stroke-width="0.5" stroke-dasharray="3 1.5" opacity="0.8"/>
<path d="M882.0 680.6 C889.0 684.6 899.0 683.6 907.0 678.6" fill="none" stroke="#a5a5a5" stroke-width="0.5" stroke-dasharray="2 2" opacity="0.8"/>
<path d="M911.5 681.6 C917.5 672.6 928.5 670.6 935.0 673.6" fill="none" stroke="#9a9a9a" stroke-width="0.5" stroke-dasharray="3 1.5" opacity="0.8"/>
<path d="M909.5 680.6 C916.5 684.6 926.5 683.6 934.5 678.6" fill="none" stroke="#a5a5a5" stroke-width="0.5" stroke-dasharray="2 2" opacity="0.8"/>
<path d="M939.0 681.6 C945.0 672.6 956.0 670.6 962.5 673.6" fill="none" stroke="#9a9a9a" stroke-width="0.5" stroke-dasharray="3 1.5" opacity="0.8"/>
<path d="M937.0 680.6 C944.0 684.6 954.0 683.6 962.0 678.6" fill="none" stroke="#a5a5a5" stroke-width="0.5" stroke-dasharray="2 2" opacity="0.8"/>
<path d="M966.5 681.6 C972.5 672.6 983.5 670.6 990.0 673.6" fill="none" stroke="#9a9a9a" stroke-width="0.5" stroke-dasharray="3 1.5" opacity="0.8"/>
<path d="M964.5 680.6 C971.5 684.6 981.5 683.6 989.5 678.6" fill="none" stroke="#a5a5a5" stroke-width="0.5" stroke-dasharray="2 2" opacity="0.8"/>
<path d="M168.0 681.6 L179.0 675.6 M181.0 674.6 L192.0 670.6" fill="none" stroke="#b0b0b0" stroke-width="0.5" stroke-dasharray="2.5 1.5"/>
<path d="M360.5 681.6 L371.5 675.6 M373.5 674.6 L384.5 670.6" fill="none" stroke="#b0b0b0" stroke-width="0.5" stroke-dasharray="2.5 1.5"/>
<path d="M388.0 681.6 L399.0 675.6 M401.0 674.6 L412.0 670.6" fill="none" stroke="#b0b0b0" stroke-width="0.5" stroke-dasharray="2.5 1.5"/>
<path d="M443.0 681.6 L454.0 675.6 M456.0 674.6 L467.0 670.6" fill="none" stroke="#b0b0b0" stroke-width="0.5" stroke-dasharray="2.5 1.5"/>
<path d="M470.5 681.6 L481.5 675.6 M483.5 674.6 L494.5 670.6" fill="none" stroke="#b0b0b0" stroke-width="0.5" stroke-dasharray="2.5 1.5"/>
<path d="M579.5 645.2 C586.5 639.2 592.5 632.2 599.5 633.2 C605.5 635.2 600.5 643.2 582.5 648.2 M581.5 643.2 L598.5 636.2 M583.5 646.2 L600.5 639.2" fill="none" stroke="#8c8c8c" stroke-width="0.5" opacity="0.95"/>
<path d="M607.0 645.2 C614.0 639.2 620.0 632.2 627.0 633.2 C633.0 635.2 628.0 643.2 610.0 648.2 M609.0 643.2 L626.0 636.2 M611.0 646.2 L628.0 639.2" fill="none" stroke="#8c8c8c" stroke-width="0.5" opacity="0.85"/>
<path d="M634.5 645.2 C641.5 639.2 647.5 632.2 654.5 633.2 C660.5 635.2 655.5 643.2 637.5 648.2 M636.5 643.2 L653.5 636.2 M638.5 646.2 L655.5 639.2" fill="none" stroke="#8c8c8c" stroke-width="0.5" opacity="0.75"/>
<path d="M662.0 645.2 C669.0 639.2 675.0 632.2 682.0 633.2 C688.0 635.2 683.0 643.2 665.0 648.2 M664.0 643.2 L681.0 636.2 M666.0 646.2 L683.0 639.2" fill="none" stroke="#8c8c8c" stroke-width="0.5" opacity="0.65"/>
<circle cx="710.5" cy="635.2" r="0.9" fill="none" stroke="#8a8a8a" stroke-width="0.5" opacity="0.75"/><circle cx="700.5" cy="640.2" r="0.8" fill="none" stroke="#8a8a8a" stroke-width="0.5" opacity="0.75"/><circle cx="712.5" cy="643.2" r="0.7" fill="none" stroke="#8a8a8a" stroke-width="0.5" opacity="0.75"/>
<circle cx="738.0" cy="635.2" r="0.9" fill="none" stroke="#8a8a8a" stroke-width="0.5" opacity="0.65"/><circle cx="728.0" cy="640.2" r="0.8" fill="none" stroke="#8a8a8a" stroke-width="0.5" opacity="0.65"/><circle cx="740.0" cy="643.2" r="0.7" fill="none" stroke="#8a8a8a" stroke-width="0.5" opacity="0.65"/>
<circle cx="765.5" cy="635.2" r="0.9" fill="none" stroke="#8a8a8a" stroke-width="0.5" opacity="0.55"/><circle cx="755.5" cy="640.2" r="0.8" fill="none" stroke="#8a8a8a" stroke-width="0.5" opacity="0.55"/><circle cx="767.5" cy="643.2" r="0.7" fill="none" stroke="#8a8a8a" stroke-width="0.5" opacity="0.55"/>
<circle cx="793.0" cy="635.2" r="0.9" fill="none" stroke="#8a8a8a" stroke-width="0.5" opacity="0.45"/><circle cx="783.0" cy="640.2" r="0.8" fill="none" stroke="#8a8a8a" stroke-width="0.5" opacity="0.45"/><circle cx="795.0" cy="643.2" r="0.7" fill="none" stroke="#8a8a8a" stroke-width="0.5" opacity="0.45"/>
<circle cx="820.5" cy="635.2" r="0.9" fill="none" stroke="#8a8a8a" stroke-width="0.5" opacity="0.45"/><circle cx="810.5" cy="640.2" r="0.8" fill="none" stroke="#8a8a8a" stroke-width="0.5" opacity="0.45"/><circle cx="822.5" cy="643.2" r="0.7" fill="none" stroke="#8a8a8a" stroke-width="0.5" opacity="0.45"/>
<circle cx="848.0" cy="635.2" r="0.9" fill="none" stroke="#8a8a8a" stroke-width="0.5" opacity="0.45"/><circle cx="838.0" cy="640.2" r="0.8" fill="none" stroke="#8a8a8a" stroke-width="0.5" opacity="0.45"/><circle cx="850.0" cy="643.2" r="0.7" fill="none" stroke="#8a8a8a" stroke-width="0.5" opacity="0.45"/>
<circle cx="875.5" cy="635.2" r="0.9" fill="none" stroke="#8a8a8a" stroke-width="0.5" opacity="0.45"/><circle cx="865.5" cy="640.2" r="0.8" fill="none" stroke="#8a8a8a" stroke-width="0.5" opacity="0.45"/><circle cx="877.5" cy="643.2" r="0.7" fill="none" stroke="#8a8a8a" stroke-width="0.5" opacity="0.45"/>
<circle cx="903.0" cy="635.2" r="0.9" fill="none" stroke="#8a8a8a" stroke-width="0.5" opacity="0.45"/><circle cx="893.0" cy="640.2" r="0.8" fill="none" stroke="#8a8a8a" stroke-width="0.5" opacity="0.45"/><circle cx="905.0" cy="643.2" r="0.7" fill="none" stroke="#8a8a8a" stroke-width="0.5" opacity="0.45"/>
<ellipse cx="867.7" cy="625.0" rx="1.5" ry="1.2" fill="#111"/>
<ellipse cx="894.8" cy="625.0" rx="1.4" ry="1.1" fill="#111"/>
<ellipse cx="867.7" cy="656.7" rx="1.2" ry="1.0" fill="#111"/>
<ellipse cx="894.8" cy="656.9" rx="0.9" ry="0.7" fill="#111"/>
<rect x="605.35" y="622.20" width="1.3" height="37.40" fill="#2c2c2c"/><path d="M603.70 659.30 l2.3 -1.7 l2.3 1.7 l-2.3 1.7z" fill="#111"/>
<rect x="632.85" y="622.20" width="1.3" height="37.40" fill="#2c2c2c"/><path d="M631.20 659.30 l2.3 -1.7 l2.3 1.7 l-2.3 1.7z" fill="#111"/>
<rect x="660.35" y="622.20" width="1.3" height="37.40" fill="#2c2c2c"/><path d="M658.70 659.30 l2.3 -1.7 l2.3 1.7 l-2.3 1.7z" fill="#111"/>
<rect x="687.85" y="622.20" width="1.3" height="37.40" fill="#2c2c2c"/><path d="M686.20 659.30 l2.3 -1.7 l2.3 1.7 l-2.3 1.7z" fill="#111"/>
<rect x="715.35" y="622.20" width="1.3" height="37.40" fill="#2c2c2c"/><path d="M713.70 659.30 l2.3 -1.7 l2.3 1.7 l-2.3 1.7z" fill="#111"/>
<rect x="742.85" y="622.20" width="1.3" height="37.40" fill="#2c2c2c"/><path d="M741.20 659.30 l2.3 -1.7 l2.3 1.7 l-2.3 1.7z" fill="#111"/>
<rect x="770.35" y="622.20" width="1.3" height="37.40" fill="#2c2c2c"/><path d="M768.70 659.30 l2.3 -1.7 l2.3 1.7 l-2.3 1.7z" fill="#111"/>
<rect x="797.85" y="622.20" width="1.3" height="37.40" fill="#2c2c2c"/><path d="M796.20 659.30 l2.3 -1.7 l2.3 1.7 l-2.3 1.7z" fill="#111"/>
<rect x="825.35" y="622.20" width="1.3" height="37.40" fill="#2c2c2c"/><path d="M823.70 659.30 l2.3 -1.7 l2.3 1.7 l-2.3 1.7z" fill="#111"/>
<rect x="852.85" y="622.20" width="1.3" height="37.40" fill="#2c2c2c"/><path d="M851.20 659.30 l2.3 -1.7 l2.3 1.7 l-2.3 1.7z" fill="#111"/>
<rect x="880.35" y="622.20" width="1.3" height="37.40" fill="#2c2c2c"/><path d="M878.70 659.30 l2.3 -1.7 l2.3 1.7 l-2.3 1.7z" fill="#111"/>
<rect x="577.85" y="658.60" width="1.3" height="1.00" fill="#2c2c2c"/><path d="M576.20 659.30 l2.3 -1.7 l2.3 1.7 l-2.3 1.7z" fill="#111"/>
<rect x="385.35" y="661.10" width="1.3" height="35.90" fill="#2c2c2c"/><path d="M383.70 696.70 l2.3 -1.7 l2.3 1.7 l-2.3 1.7z" fill="#111"/>
<rect x="440.35" y="661.10" width="1.3" height="35.90" fill="#2c2c2c"/><path d="M438.70 696.70 l2.3 -1.7 l2.3 1.7 l-2.3 1.7z" fill="#111"/>
<rect x="467.85" y="661.10" width="1.3" height="35.90" fill="#2c2c2c"/><path d="M466.20 696.70 l2.3 -1.7 l2.3 1.7 l-2.3 1.7z" fill="#111"/>
<rect x="495.35" y="661.10" width="1.3" height="35.90" fill="#2c2c2c"/><path d="M493.70 696.70 l2.3 -1.7 l2.3 1.7 l-2.3 1.7z" fill="#111"/>
<rect x="522.85" y="661.10" width="1.3" height="35.90" fill="#2c2c2c"/><path d="M521.20 696.70 l2.3 -1.7 l2.3 1.7 l-2.3 1.7z" fill="#111"/>
<rect x="550.35" y="661.10" width="1.3" height="35.90" fill="#2c2c2c"/><path d="M548.70 696.70 l2.3 -1.7 l2.3 1.7 l-2.3 1.7z" fill="#111"/>
<rect x="577.85" y="661.10" width="1.3" height="35.90" fill="#2c2c2c"/><path d="M576.20 696.70 l2.3 -1.7 l2.3 1.7 l-2.3 1.7z" fill="#111"/>
<rect x="605.35" y="659.60" width="1.3" height="37.40" fill="#2c2c2c"/><path d="M603.70 696.70 l2.3 -1.7 l2.3 1.7 l-2.3 1.7z" fill="#111"/>
<rect x="632.85" y="659.60" width="1.3" height="37.40" fill="#2c2c2c"/><path d="M631.20 696.70 l2.3 -1.7 l2.3 1.7 l-2.3 1.7z" fill="#111"/>
<rect x="660.35" y="659.60" width="1.3" height="37.40" fill="#2c2c2c"/><path d="M658.70 696.70 l2.3 -1.7 l2.3 1.7 l-2.3 1.7z" fill="#111"/>
<rect x="687.85" y="659.60" width="1.3" height="37.40" fill="#2c2c2c"/><path d="M686.20 696.70 l2.3 -1.7 l2.3 1.7 l-2.3 1.7z" fill="#111"/>
<rect x="715.35" y="659.60" width="1.3" height="37.40" fill="#2c2c2c"/><path d="M713.70 696.70 l2.3 -1.7 l2.3 1.7 l-2.3 1.7z" fill="#111"/>
<rect x="742.85" y="659.60" width="1.3" height="37.40" fill="#2c2c2c"/><path d="M741.20 696.70 l2.3 -1.7 l2.3 1.7 l-2.3 1.7z" fill="#111"/>
<rect x="770.35" y="659.60" width="1.3" height="37.40" fill="#2c2c2c"/><path d="M768.70 696.70 l2.3 -1.7 l2.3 1.7 l-2.3 1.7z" fill="#111"/>
<rect x="797.85" y="659.60" width="1.3" height="37.40" fill="#2c2c2c"/><path d="M796.20 696.70 l2.3 -1.7 l2.3 1.7 l-2.3 1.7z" fill="#111"/>
<rect x="825.35" y="659.60" width="1.3" height="37.40" fill="#2c2c2c"/><path d="M823.70 696.70 l2.3 -1.7 l2.3 1.7 l-2.3 1.7z" fill="#111"/>
<rect x="852.85" y="659.60" width="1.3" height="37.40" fill="#2c2c2c"/><path d="M851.20 696.70 l2.3 -1.7 l2.3 1.7 l-2.3 1.7z" fill="#111"/>
<rect x="880.35" y="659.60" width="1.3" height="37.40" fill="#2c2c2c"/><path d="M878.70 696.70 l2.3 -1.7 l2.3 1.7 l-2.3 1.7z" fill="#111"/>
<rect x="907.85" y="661.10" width="1.3" height="35.90" fill="#2c2c2c"/><path d="M906.20 696.70 l2.3 -1.7 l2.3 1.7 l-2.3 1.7z" fill="#111"/>
<rect x="935.35" y="661.10" width="1.3" height="35.90" fill="#2c2c2c"/><path d="M933.70 696.70 l2.3 -1.7 l2.3 1.7 l-2.3 1.7z" fill="#111"/>
<rect x="962.85" y="661.10" width="1.3" height="35.90" fill="#2c2c2c"/><path d="M961.20 696.70 l2.3 -1.7 l2.3 1.7 l-2.3 1.7z" fill="#111"/>
<rect x="357.85" y="661.10" width="1.3" height="35.90" fill="#2c2c2c"/><path d="M356.20 696.70 l2.3 -1.7 l2.3 1.7 l-2.3 1.7z" fill="#111"/>
<rect x="413.20" y="598" width="28.60" height="26" rx="2.5" fill="#80c4d9"/>
<rect x="413.20" y="623.70" width="28.60" height="35.90" fill="#38515b"/>
<rect x="413.20" y="697.00" width="28.60" height="38.20" fill="#6f8d97"/>
<rect x="413.20" y="622.20" width="2" height="113.00" fill="#80c4d9"/>
<rect x="439.80" y="622.20" width="2" height="113.00" fill="#80c4d9"/>
<text x="427.50" y="615" font-size="11" font-weight="bold" fill="#1c2b31" text-anchor="middle" font-family="Liberation Sans, sans-serif">10</text>
<rect x="413.90" y="660.30" width="27.20" height="36.40" rx="3.5" fill="#80c4d9" stroke="#1b1b1b" stroke-width="1.5"/>
<rect x="421.20" y="662.80" width="12.6" height="31" rx="3.2" fill="#fff" stroke="#262626" stroke-width="1.4"/>
<rect x="416.60" y="673.40" width="2.2" height="9" rx="1" fill="#1d1d1d"/>
<rect x="436.20" y="673.40" width="2.2" height="9" rx="1" fill="#1d1d1d"/>
<ellipse cx="426.9" cy="677" rx="1.7" ry="1.3" fill="#0a0a0a"/>
</svg>
<svg class="abs" style="left:0;top:0" width="1024" height="768" viewBox="0 0 1024 768"><rect x="167.3" y="737" width="28.7" height="28.5" rx="3.6" fill="#3a4f58"/>
<path d="M182.6 746.5 H180.2 A4.15 4.15 0 0 0 180.2 754.8 H182.6" fill="none" stroke="#efefef" stroke-width="4.3"/>
<rect x="183.9" y="744.35" width="4.3" height="4.3" fill="#efefef"/><rect x="183.9" y="752.65" width="4.3" height="4.3" fill="#efefef"/>
<g fill="#b6b6b6"><rect x="206.9" y="743.4" width="4.7" height="4.7" rx="0.9"/><rect x="217.7" y="743.4" width="4.7" height="4.7" rx="0.9"/><rect x="217.7" y="754.3" width="4.7" height="4.7" rx="0.9"/></g>
<path d="M209.2 745.7 H220 M209.2 745.7 C210 752 214 756.6 220 756.6" fill="none" stroke="#b6b6b6" stroke-width="1.3"/>
<g transform="translate(247.3,751.1) rotate(45)"><rect x="-3.5" y="-3.5" width="7" height="7" rx="1.1" fill="#b6b6b6"/></g></svg>
<div class="t" style="left:767px;top:744px;font-size:12.5px;color:#cfcfcf;letter-spacing:-0.2px">Add Drawing</div>
<div class="t" style="left:874px;top:744px;font-size:12.5px;color:#cfcfcf;letter-spacing:-0.2px">Duplicate</div>
<div class="t" style="left:963px;top:744px;font-size:12.5px;color:#cfcfcf;letter-spacing:-0.2px">Extend</div>
</div>

</body></html>
